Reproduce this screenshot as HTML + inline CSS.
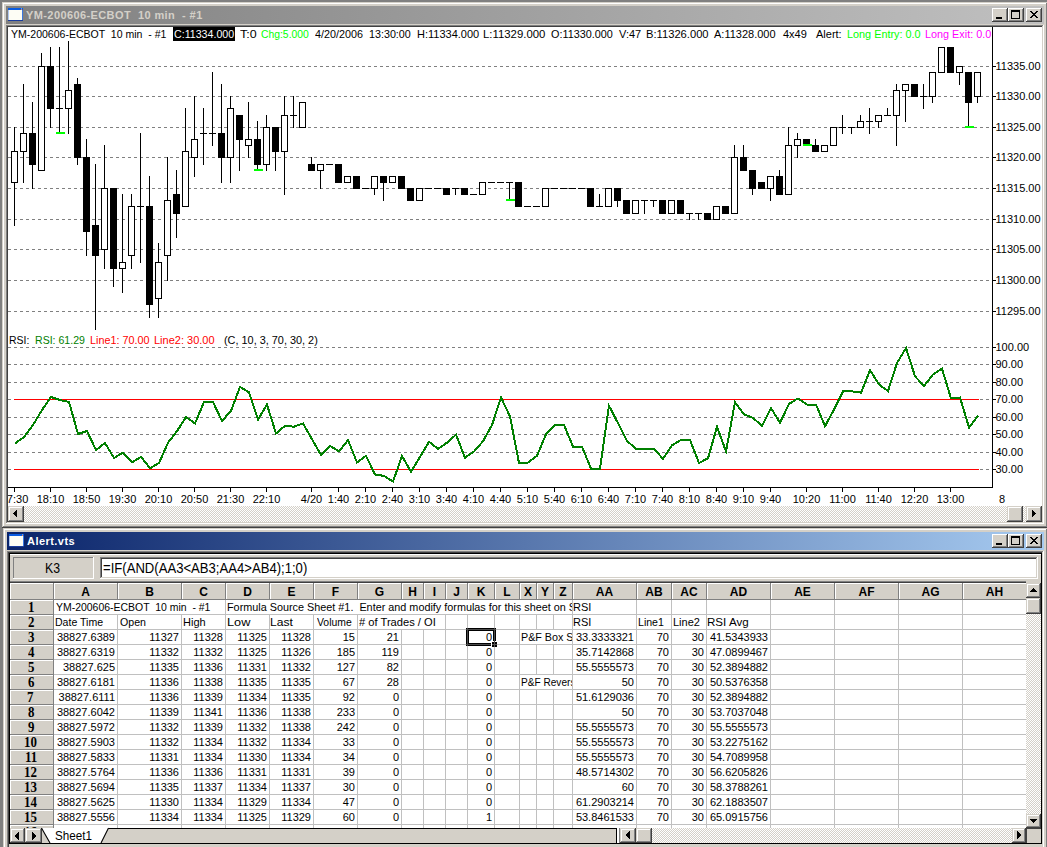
<!DOCTYPE html><html><head><meta charset="utf-8"><style>html,body{margin:0;padding:0;width:1047px;height:847px;overflow:hidden;background:#808080;position:relative}</style></head><body>
<div style="position:absolute;left:2px;top:2px;width:1046px;height:526px;background:#d4d0c8;"></div>
<div style="position:absolute;left:3px;top:3px;width:1044px;height:1px;background:#ffffff;"></div>
<div style="position:absolute;left:3px;top:3px;width:1px;height:524px;background:#ffffff;"></div>
<div style="position:absolute;left:2px;top:527px;width:1046px;height:1px;background:#404040;"></div>
<div style="position:absolute;left:1047px;top:2px;width:1px;height:526px;background:#404040;"></div>
<div style="position:absolute;left:3px;top:526px;width:1044px;height:1px;background:#808080;"></div>
<div style="position:absolute;left:1046px;top:3px;width:1px;height:524px;background:#808080;"></div>
<div style="position:absolute;left:6px;top:6px;width:1038px;height:18px;background:linear-gradient(to right,#808080,#c0c0c0)"></div>
<div style="position:absolute;left:8px;top:8px;width:15px;height:13px;background:#fdfdf5;"></div>
<div style="position:absolute;left:8px;top:8px;width:15px;height:2px;background:#0a5ce0;"></div>
<div style="position:absolute;left:21px;top:8px;width:1px;height:1px;background:#5c9cf0;"></div>
<div style="position:absolute;left:21px;top:9px;width:1px;height:1px;background:#f08040;"></div>
<div style="position:absolute;left:8px;top:10px;width:1px;height:10px;background:#b0c8f0;"></div>
<div style="position:absolute;left:22px;top:10px;width:1px;height:10px;background:#3a78e0;"></div>
<div style="position:absolute;left:8px;top:20px;width:15px;height:1px;background:#1a3c9c;"></div>
<div style="position:absolute;left:26px;top:8px;font:bold 11px 'Liberation Sans', sans-serif;color:#d4d0c8;white-space:pre;line-height:1;letter-spacing:0.4px;top:10px">YM-200606-ECBOT  10 min  - #1</div>
<div style="position:absolute;left:992px;top:8px;width:16px;height:14px;background:#d4d0c8;"></div>
<div style="position:absolute;left:992px;top:8px;width:16px;height:1px;background:#ffffff;"></div>
<div style="position:absolute;left:992px;top:8px;width:1px;height:14px;background:#ffffff;"></div>
<div style="position:absolute;left:992px;top:21px;width:16px;height:1px;background:#404040;"></div>
<div style="position:absolute;left:1007px;top:8px;width:1px;height:14px;background:#404040;"></div>
<div style="position:absolute;left:993px;top:20px;width:14px;height:1px;background:#808080;"></div>
<div style="position:absolute;left:1006px;top:9px;width:1px;height:12px;background:#808080;"></div>
<div style="position:absolute;left:1008px;top:8px;width:16px;height:14px;background:#d4d0c8;"></div>
<div style="position:absolute;left:1008px;top:8px;width:16px;height:1px;background:#ffffff;"></div>
<div style="position:absolute;left:1008px;top:8px;width:1px;height:14px;background:#ffffff;"></div>
<div style="position:absolute;left:1008px;top:21px;width:16px;height:1px;background:#404040;"></div>
<div style="position:absolute;left:1023px;top:8px;width:1px;height:14px;background:#404040;"></div>
<div style="position:absolute;left:1009px;top:20px;width:14px;height:1px;background:#808080;"></div>
<div style="position:absolute;left:1022px;top:9px;width:1px;height:12px;background:#808080;"></div>
<div style="position:absolute;left:1026px;top:8px;width:16px;height:14px;background:#d4d0c8;"></div>
<div style="position:absolute;left:1026px;top:8px;width:16px;height:1px;background:#ffffff;"></div>
<div style="position:absolute;left:1026px;top:8px;width:1px;height:14px;background:#ffffff;"></div>
<div style="position:absolute;left:1026px;top:21px;width:16px;height:1px;background:#404040;"></div>
<div style="position:absolute;left:1041px;top:8px;width:1px;height:14px;background:#404040;"></div>
<div style="position:absolute;left:1027px;top:20px;width:14px;height:1px;background:#808080;"></div>
<div style="position:absolute;left:1040px;top:9px;width:1px;height:12px;background:#808080;"></div>
<div style="position:absolute;left:996px;top:17px;width:6px;height:2px;background:#000;"></div>
<div style="position:absolute;left:1011px;top:10px;width:7px;height:6px;border:1px solid #000;border-top-width:2px;"></div>
<svg style="position:absolute;left:1026px;top:8px" width="16" height="14" shape-rendering="crispEdges"><path d="M4 3h2v1h-2zM10 3h2v1h-2zM5 4h2v1h-2zM9 4h2v1h-2zM6 5h4v1h-4zM7 6h2v1h-2zM6 7h4v1h-4zM5 8h2v1h-2zM9 8h2v1h-2zM4 9h2v1h-2zM10 9h2v1h-2z" fill="#000"/></svg>
<div style="position:absolute;left:6px;top:25px;width:1038px;height:1px;background:#808080;"></div>
<div style="position:absolute;left:6px;top:25px;width:1px;height:499px;background:#808080;"></div>
<div style="position:absolute;left:7px;top:26px;width:1036px;height:1px;background:#404040;"></div>
<div style="position:absolute;left:7px;top:26px;width:1px;height:497px;background:#404040;"></div>
<div style="position:absolute;left:6px;top:523px;width:1038px;height:1px;background:#ffffff;"></div>
<div style="position:absolute;left:1043px;top:25px;width:1px;height:499px;background:#ffffff;"></div>
<div style="position:absolute;left:7px;top:522px;width:1036px;height:1px;background:#d4d0c8;"></div>
<div style="position:absolute;left:1042px;top:26px;width:1px;height:497px;background:#d4d0c8;"></div>
<div style="position:absolute;left:8px;top:27px;width:1034px;height:495px;background:#ffffff;"></div>
<svg style="position:absolute;left:0;top:0" width="1047" height="530" shape-rendering="crispEdges"><line x1="8" y1="66.5" x2="992" y2="66.5" stroke="#808080" stroke-dasharray="3 3"/><rect x="993" y="66" width="3" height="1" fill="#000"/><text x="995.5" y="70" font-family="Liberation Sans" font-size="11" fill="#000">11335.00</text><line x1="8" y1="96.5" x2="992" y2="96.5" stroke="#808080" stroke-dasharray="3 3"/><rect x="993" y="96" width="3" height="1" fill="#000"/><text x="995.5" y="100" font-family="Liberation Sans" font-size="11" fill="#000">11330.00</text><line x1="8" y1="127.5" x2="992" y2="127.5" stroke="#808080" stroke-dasharray="3 3"/><rect x="993" y="127" width="3" height="1" fill="#000"/><text x="995.5" y="131" font-family="Liberation Sans" font-size="11" fill="#000">11325.00</text><line x1="8" y1="157.5" x2="992" y2="157.5" stroke="#808080" stroke-dasharray="3 3"/><rect x="993" y="157" width="3" height="1" fill="#000"/><text x="995.5" y="161" font-family="Liberation Sans" font-size="11" fill="#000">11320.00</text><line x1="8" y1="188.5" x2="992" y2="188.5" stroke="#808080" stroke-dasharray="3 3"/><rect x="993" y="188" width="3" height="1" fill="#000"/><text x="995.5" y="192" font-family="Liberation Sans" font-size="11" fill="#000">11315.00</text><line x1="8" y1="219.5" x2="992" y2="219.5" stroke="#808080" stroke-dasharray="3 3"/><rect x="993" y="219" width="3" height="1" fill="#000"/><text x="995.5" y="223" font-family="Liberation Sans" font-size="11" fill="#000">11310.00</text><line x1="8" y1="249.5" x2="992" y2="249.5" stroke="#808080" stroke-dasharray="3 3"/><rect x="993" y="249" width="3" height="1" fill="#000"/><text x="995.5" y="253" font-family="Liberation Sans" font-size="11" fill="#000">11305.00</text><line x1="8" y1="280.5" x2="992" y2="280.5" stroke="#808080" stroke-dasharray="3 3"/><rect x="993" y="280" width="3" height="1" fill="#000"/><text x="995.5" y="284" font-family="Liberation Sans" font-size="11" fill="#000">11300.00</text><line x1="8" y1="311.5" x2="992" y2="311.5" stroke="#808080" stroke-dasharray="3 3"/><rect x="993" y="311" width="3" height="1" fill="#000"/><text x="995.5" y="315" font-family="Liberation Sans" font-size="11" fill="#000">11295.00</text><line x1="8" y1="347.5" x2="992" y2="347.5" stroke="#808080" stroke-dasharray="3 3"/><rect x="993" y="347" width="3" height="1" fill="#000"/><text x="995.5" y="351" font-family="Liberation Sans" font-size="11" fill="#000">100.00</text><line x1="8" y1="364.5" x2="992" y2="364.5" stroke="#808080" stroke-dasharray="3 3"/><rect x="993" y="364" width="3" height="1" fill="#000"/><text x="995.5" y="368" font-family="Liberation Sans" font-size="11" fill="#000">90.00</text><line x1="8" y1="382.5" x2="992" y2="382.5" stroke="#808080" stroke-dasharray="3 3"/><rect x="993" y="382" width="3" height="1" fill="#000"/><text x="995.5" y="386" font-family="Liberation Sans" font-size="11" fill="#000">80.00</text><line x1="8" y1="399.5" x2="992" y2="399.5" stroke="#808080" stroke-dasharray="3 3"/><rect x="993" y="399" width="3" height="1" fill="#000"/><text x="995.5" y="403" font-family="Liberation Sans" font-size="11" fill="#000">70.00</text><line x1="8" y1="417.5" x2="992" y2="417.5" stroke="#808080" stroke-dasharray="3 3"/><rect x="993" y="417" width="3" height="1" fill="#000"/><text x="995.5" y="421" font-family="Liberation Sans" font-size="11" fill="#000">60.00</text><line x1="8" y1="434.5" x2="992" y2="434.5" stroke="#808080" stroke-dasharray="3 3"/><rect x="993" y="434" width="3" height="1" fill="#000"/><text x="995.5" y="438" font-family="Liberation Sans" font-size="11" fill="#000">50.00</text><line x1="8" y1="452.5" x2="992" y2="452.5" stroke="#808080" stroke-dasharray="3 3"/><rect x="993" y="452" width="3" height="1" fill="#000"/><text x="995.5" y="456" font-family="Liberation Sans" font-size="11" fill="#000">40.00</text><line x1="8" y1="469.5" x2="992" y2="469.5" stroke="#808080" stroke-dasharray="3 3"/><rect x="993" y="469" width="3" height="1" fill="#000"/><text x="995.5" y="473" font-family="Liberation Sans" font-size="11" fill="#000">30.00</text><rect x="14" y="399" width="965" height="1" fill="#ff0000"/><rect x="14" y="469" width="965" height="1" fill="#ff0000"/><rect x="992" y="27" width="1" height="461" fill="#000"/><rect x="8" y="487" width="985" height="1" fill="#000"/><rect x="14" y="127" width="1" height="99" fill="#000"/><rect x="11" y="151" width="7" height="32" fill="#000"/><rect x="12" y="152" width="5" height="30" fill="#fff"/><rect x="23" y="84" width="1" height="99" fill="#000"/><rect x="20" y="133" width="7" height="19" fill="#000"/><rect x="21" y="134" width="5" height="17" fill="#fff"/><rect x="32" y="102" width="1" height="87" fill="#000"/><rect x="29" y="133" width="7" height="32" fill="#000"/><rect x="41" y="53" width="1" height="118" fill="#000"/><rect x="38" y="66" width="7" height="105" fill="#000"/><rect x="39" y="67" width="5" height="103" fill="#fff"/><rect x="50" y="47" width="1" height="81" fill="#000"/><rect x="47" y="66" width="7" height="43" fill="#000"/><rect x="59" y="47" width="1" height="87" fill="#000"/><rect x="56" y="108" width="7" height="1" fill="#000"/><rect x="68" y="41" width="1" height="93" fill="#000"/><rect x="65" y="90" width="7" height="19" fill="#000"/><rect x="66" y="91" width="5" height="17" fill="#fff"/><rect x="77" y="78" width="1" height="87" fill="#000"/><rect x="74" y="84" width="7" height="74" fill="#000"/><rect x="86" y="139" width="1" height="117" fill="#000"/><rect x="83" y="157" width="7" height="75" fill="#000"/><rect x="95" y="164" width="1" height="166" fill="#000"/><rect x="92" y="225" width="7" height="31" fill="#000"/><rect x="104" y="145" width="1" height="124" fill="#000"/><rect x="101" y="188" width="7" height="62" fill="#000"/><rect x="102" y="189" width="5" height="60" fill="#fff"/><rect x="113" y="188" width="1" height="99" fill="#000"/><rect x="110" y="188" width="7" height="81" fill="#000"/><rect x="122" y="194" width="1" height="99" fill="#000"/><rect x="119" y="262" width="7" height="7" fill="#000"/><rect x="120" y="263" width="5" height="5" fill="#fff"/><rect x="131" y="194" width="1" height="75" fill="#000"/><rect x="128" y="206" width="7" height="50" fill="#000"/><rect x="129" y="207" width="5" height="48" fill="#fff"/><rect x="140" y="133" width="1" height="130" fill="#000"/><rect x="137" y="206" width="7" height="1" fill="#000"/><rect x="149" y="176" width="1" height="142" fill="#000"/><rect x="146" y="206" width="7" height="99" fill="#000"/><rect x="158" y="243" width="1" height="75" fill="#000"/><rect x="155" y="262" width="7" height="37" fill="#000"/><rect x="156" y="263" width="5" height="35" fill="#fff"/><rect x="167" y="157" width="1" height="124" fill="#000"/><rect x="164" y="200" width="7" height="56" fill="#000"/><rect x="165" y="201" width="5" height="54" fill="#fff"/><rect x="176" y="170" width="1" height="68" fill="#000"/><rect x="173" y="194" width="7" height="20" fill="#000"/><rect x="185" y="108" width="1" height="99" fill="#000"/><rect x="182" y="151" width="7" height="56" fill="#000"/><rect x="183" y="152" width="5" height="54" fill="#fff"/><rect x="194" y="96" width="1" height="81" fill="#000"/><rect x="191" y="139" width="7" height="19" fill="#000"/><rect x="192" y="140" width="5" height="17" fill="#fff"/><rect x="203" y="108" width="1" height="57" fill="#000"/><rect x="200" y="133" width="7" height="1" fill="#000"/><rect x="212" y="72" width="1" height="74" fill="#000"/><rect x="209" y="133" width="7" height="1" fill="#000"/><rect x="221" y="84" width="1" height="99" fill="#000"/><rect x="218" y="133" width="7" height="25" fill="#000"/><rect x="230" y="96" width="1" height="87" fill="#000"/><rect x="227" y="108" width="7" height="50" fill="#000"/><rect x="228" y="109" width="5" height="48" fill="#fff"/><rect x="239" y="115" width="1" height="56" fill="#000"/><rect x="236" y="115" width="7" height="25" fill="#000"/><rect x="248" y="102" width="1" height="56" fill="#000"/><rect x="245" y="139" width="7" height="7" fill="#000"/><rect x="246" y="140" width="5" height="5" fill="#fff"/><rect x="257" y="121" width="1" height="50" fill="#000"/><rect x="254" y="139" width="7" height="26" fill="#000"/><rect x="266" y="115" width="1" height="56" fill="#000"/><rect x="263" y="127" width="7" height="38" fill="#000"/><rect x="264" y="128" width="5" height="36" fill="#fff"/><rect x="275" y="127" width="1" height="44" fill="#000"/><rect x="272" y="127" width="7" height="25" fill="#000"/><rect x="284" y="96" width="1" height="99" fill="#000"/><rect x="281" y="115" width="7" height="37" fill="#000"/><rect x="282" y="116" width="5" height="35" fill="#fff"/><rect x="293" y="96" width="1" height="32" fill="#000"/><rect x="290" y="115" width="7" height="1" fill="#000"/><rect x="302" y="102" width="1" height="26" fill="#000"/><rect x="299" y="102" width="7" height="26" fill="#000"/><rect x="300" y="103" width="5" height="24" fill="#fff"/><rect x="311" y="157" width="1" height="14" fill="#000"/><rect x="308" y="164" width="7" height="7" fill="#000"/><rect x="320" y="164" width="1" height="25" fill="#000"/><rect x="317" y="164" width="7" height="7" fill="#000"/><rect x="318" y="165" width="5" height="5" fill="#fff"/><rect x="329" y="164" width="1" height="1" fill="#000"/><rect x="326" y="164" width="7" height="1" fill="#000"/><rect x="338" y="164" width="1" height="19" fill="#000"/><rect x="335" y="164" width="7" height="19" fill="#000"/><rect x="347" y="176" width="1" height="7" fill="#000"/><rect x="344" y="176" width="7" height="7" fill="#000"/><rect x="345" y="177" width="5" height="5" fill="#fff"/><rect x="356" y="176" width="1" height="13" fill="#000"/><rect x="353" y="176" width="7" height="13" fill="#000"/><rect x="365" y="188" width="1" height="1" fill="#000"/><rect x="362" y="188" width="7" height="1" fill="#000"/><rect x="374" y="176" width="1" height="19" fill="#000"/><rect x="371" y="176" width="7" height="13" fill="#000"/><rect x="372" y="177" width="5" height="11" fill="#fff"/><rect x="383" y="176" width="1" height="25" fill="#000"/><rect x="380" y="176" width="7" height="7" fill="#000"/><rect x="392" y="176" width="1" height="7" fill="#000"/><rect x="389" y="176" width="7" height="7" fill="#000"/><rect x="390" y="177" width="5" height="5" fill="#fff"/><rect x="401" y="176" width="1" height="13" fill="#000"/><rect x="398" y="176" width="7" height="13" fill="#000"/><rect x="410" y="188" width="1" height="13" fill="#000"/><rect x="407" y="188" width="7" height="13" fill="#000"/><rect x="419" y="188" width="1" height="13" fill="#000"/><rect x="416" y="188" width="7" height="13" fill="#000"/><rect x="417" y="189" width="5" height="11" fill="#fff"/><rect x="428" y="188" width="1" height="1" fill="#000"/><rect x="425" y="188" width="7" height="1" fill="#000"/><rect x="437" y="188" width="1" height="1" fill="#000"/><rect x="434" y="188" width="7" height="1" fill="#000"/><rect x="446" y="188" width="1" height="7" fill="#000"/><rect x="443" y="188" width="7" height="7" fill="#000"/><rect x="455" y="188" width="1" height="7" fill="#000"/><rect x="452" y="188" width="7" height="1" fill="#000"/><rect x="464" y="188" width="1" height="7" fill="#000"/><rect x="461" y="188" width="7" height="7" fill="#000"/><rect x="473" y="194" width="1" height="1" fill="#000"/><rect x="470" y="194" width="7" height="1" fill="#000"/><rect x="482" y="182" width="1" height="13" fill="#000"/><rect x="479" y="182" width="7" height="13" fill="#000"/><rect x="480" y="183" width="5" height="11" fill="#fff"/><rect x="491" y="182" width="1" height="1" fill="#000"/><rect x="488" y="182" width="7" height="1" fill="#000"/><rect x="500" y="182" width="1" height="1" fill="#000"/><rect x="497" y="182" width="7" height="1" fill="#000"/><rect x="509" y="182" width="1" height="19" fill="#000"/><rect x="506" y="182" width="7" height="1" fill="#000"/><rect x="518" y="182" width="1" height="25" fill="#000"/><rect x="515" y="182" width="7" height="25" fill="#000"/><rect x="527" y="206" width="1" height="1" fill="#000"/><rect x="524" y="206" width="7" height="1" fill="#000"/><rect x="536" y="206" width="1" height="1" fill="#000"/><rect x="533" y="206" width="7" height="1" fill="#000"/><rect x="545" y="188" width="1" height="19" fill="#000"/><rect x="542" y="188" width="7" height="19" fill="#000"/><rect x="543" y="189" width="5" height="17" fill="#fff"/><rect x="554" y="188" width="1" height="1" fill="#000"/><rect x="551" y="188" width="7" height="1" fill="#000"/><rect x="563" y="188" width="1" height="1" fill="#000"/><rect x="560" y="188" width="7" height="1" fill="#000"/><rect x="572" y="188" width="1" height="1" fill="#000"/><rect x="569" y="188" width="7" height="1" fill="#000"/><rect x="581" y="188" width="1" height="1" fill="#000"/><rect x="578" y="188" width="7" height="1" fill="#000"/><rect x="590" y="188" width="1" height="19" fill="#000"/><rect x="587" y="188" width="7" height="19" fill="#000"/><rect x="599" y="194" width="1" height="13" fill="#000"/><rect x="596" y="206" width="7" height="1" fill="#000"/><rect x="608" y="188" width="1" height="19" fill="#000"/><rect x="605" y="188" width="7" height="19" fill="#000"/><rect x="606" y="189" width="5" height="17" fill="#fff"/><rect x="617" y="188" width="1" height="19" fill="#000"/><rect x="614" y="188" width="7" height="13" fill="#000"/><rect x="626" y="200" width="1" height="14" fill="#000"/><rect x="623" y="200" width="7" height="14" fill="#000"/><rect x="635" y="200" width="1" height="14" fill="#000"/><rect x="632" y="200" width="7" height="14" fill="#000"/><rect x="633" y="201" width="5" height="12" fill="#fff"/><rect x="644" y="200" width="1" height="14" fill="#000"/><rect x="641" y="200" width="7" height="1" fill="#000"/><rect x="653" y="200" width="1" height="7" fill="#000"/><rect x="650" y="200" width="7" height="1" fill="#000"/><rect x="662" y="200" width="1" height="14" fill="#000"/><rect x="659" y="200" width="7" height="14" fill="#000"/><rect x="671" y="200" width="1" height="14" fill="#000"/><rect x="668" y="200" width="7" height="14" fill="#000"/><rect x="669" y="201" width="5" height="12" fill="#fff"/><rect x="680" y="200" width="1" height="14" fill="#000"/><rect x="677" y="200" width="7" height="14" fill="#000"/><rect x="689" y="213" width="1" height="7" fill="#000"/><rect x="686" y="213" width="7" height="1" fill="#000"/><rect x="698" y="213" width="1" height="7" fill="#000"/><rect x="695" y="213" width="7" height="1" fill="#000"/><rect x="707" y="213" width="1" height="7" fill="#000"/><rect x="704" y="213" width="7" height="7" fill="#000"/><rect x="716" y="206" width="1" height="14" fill="#000"/><rect x="713" y="206" width="7" height="14" fill="#000"/><rect x="714" y="207" width="5" height="12" fill="#fff"/><rect x="725" y="206" width="1" height="8" fill="#000"/><rect x="722" y="206" width="7" height="8" fill="#000"/><rect x="734" y="145" width="1" height="69" fill="#000"/><rect x="731" y="157" width="7" height="57" fill="#000"/><rect x="732" y="158" width="5" height="55" fill="#fff"/><rect x="743" y="145" width="1" height="26" fill="#000"/><rect x="740" y="157" width="7" height="14" fill="#000"/><rect x="752" y="170" width="1" height="25" fill="#000"/><rect x="749" y="170" width="7" height="19" fill="#000"/><rect x="761" y="182" width="1" height="7" fill="#000"/><rect x="758" y="182" width="7" height="7" fill="#000"/><rect x="770" y="176" width="1" height="25" fill="#000"/><rect x="767" y="176" width="7" height="13" fill="#000"/><rect x="768" y="177" width="5" height="11" fill="#fff"/><rect x="779" y="170" width="1" height="25" fill="#000"/><rect x="776" y="176" width="7" height="19" fill="#000"/><rect x="788" y="127" width="1" height="68" fill="#000"/><rect x="785" y="145" width="7" height="50" fill="#000"/><rect x="786" y="146" width="5" height="48" fill="#fff"/><rect x="797" y="133" width="1" height="25" fill="#000"/><rect x="794" y="139" width="7" height="7" fill="#000"/><rect x="795" y="140" width="5" height="5" fill="#fff"/><rect x="806" y="139" width="1" height="7" fill="#000"/><rect x="803" y="139" width="7" height="7" fill="#000"/><rect x="815" y="139" width="1" height="13" fill="#000"/><rect x="812" y="145" width="7" height="7" fill="#000"/><rect x="824" y="145" width="1" height="7" fill="#000"/><rect x="821" y="145" width="7" height="7" fill="#000"/><rect x="822" y="146" width="5" height="5" fill="#fff"/><rect x="833" y="127" width="1" height="19" fill="#000"/><rect x="830" y="127" width="7" height="19" fill="#000"/><rect x="831" y="128" width="5" height="17" fill="#fff"/><rect x="842" y="115" width="1" height="19" fill="#000"/><rect x="839" y="127" width="7" height="1" fill="#000"/><rect x="851" y="127" width="1" height="7" fill="#000"/><rect x="848" y="127" width="7" height="1" fill="#000"/><rect x="860" y="115" width="1" height="13" fill="#000"/><rect x="857" y="121" width="7" height="7" fill="#000"/><rect x="858" y="122" width="5" height="5" fill="#fff"/><rect x="869" y="108" width="1" height="26" fill="#000"/><rect x="866" y="121" width="7" height="1" fill="#000"/><rect x="878" y="115" width="1" height="13" fill="#000"/><rect x="875" y="115" width="7" height="7" fill="#000"/><rect x="876" y="116" width="5" height="5" fill="#fff"/><rect x="887" y="108" width="1" height="8" fill="#000"/><rect x="884" y="115" width="7" height="1" fill="#000"/><rect x="896" y="84" width="1" height="62" fill="#000"/><rect x="893" y="90" width="7" height="26" fill="#000"/><rect x="894" y="91" width="5" height="24" fill="#fff"/><rect x="905" y="84" width="1" height="38" fill="#000"/><rect x="902" y="84" width="7" height="7" fill="#000"/><rect x="903" y="85" width="5" height="5" fill="#fff"/><rect x="914" y="84" width="1" height="13" fill="#000"/><rect x="911" y="84" width="7" height="13" fill="#000"/><rect x="923" y="84" width="1" height="25" fill="#000"/><rect x="920" y="96" width="7" height="1" fill="#000"/><rect x="932" y="72" width="1" height="31" fill="#000"/><rect x="929" y="72" width="7" height="25" fill="#000"/><rect x="930" y="73" width="5" height="23" fill="#fff"/><rect x="941" y="47" width="1" height="26" fill="#000"/><rect x="938" y="47" width="7" height="26" fill="#000"/><rect x="939" y="48" width="5" height="24" fill="#fff"/><rect x="950" y="47" width="1" height="26" fill="#000"/><rect x="947" y="47" width="7" height="26" fill="#000"/><rect x="959" y="66" width="1" height="19" fill="#000"/><rect x="956" y="66" width="7" height="7" fill="#000"/><rect x="957" y="67" width="5" height="5" fill="#fff"/><rect x="968" y="72" width="1" height="56" fill="#000"/><rect x="965" y="72" width="7" height="31" fill="#000"/><rect x="977" y="72" width="1" height="31" fill="#000"/><rect x="974" y="72" width="7" height="25" fill="#000"/><rect x="975" y="73" width="5" height="23" fill="#fff"/><rect x="56" y="132" width="9" height="2" fill="#00ff00"/><rect x="254" y="169" width="9" height="2" fill="#00ff00"/><rect x="506" y="199" width="9" height="2" fill="#00ff00"/><rect x="803" y="144" width="9" height="2" fill="#00ff00"/><rect x="965" y="126" width="9" height="2" fill="#00ff00"/><polyline points="15,443.5 24,437.0 33,425.0 42,410.0 51,397.0 60,400.0 69,402.0 78,434.0 87,431.0 96,450.0 105,443.0 114,458.0 123,452.5 132,462.5 141,456.8 150,468.3 159,463.0 168,442.7 177,431.2 186,417.0 195,423.5 204,402.0 213,402.0 222,421.0 231,410.8 240,387.0 249,392.2 258,419.6 267,404.6 276,433.5 285,425.8 294,426.7 303,423.5 312,439.1 321,455.0 330,445.8 339,451.5 348,440.0 357,462.5 366,455.9 375,474.5 384,475.9 393,481.6 402,455.9 411,471.9 420,456.8 429,441.8 438,448.8 447,442.7 456,434.7 465,457.7 474,451.5 483,441.2 492,425.0 501,397.5 510,416.5 519,463.0 528,462.5 537,455.9 546,434.2 555,425.0 564,425.0 573,446.7 582,446.7 591,468.7 600,468.7 609,405.8 618,423.2 627,440.9 636,448.8 645,448.8 654,448.8 663,458.9 672,445.3 681,440.0 690,440.0 699,463.0 708,458.2 717,426.7 726,451.5 735,402.3 744,414.3 753,417.9 762,425.8 771,408.1 780,422.8 789,404.0 798,398.4 807,404.6 816,404.6 825,426.2 834,409.6 843,391.3 852,391.3 861,392.7 870,370.1 879,384.5 888,391.0 897,363.0 906,348.0 915,376.3 924,386.0 933,374.5 942,368.7 951,398.4 960,397.5 969,427.6 978,415.8" fill="none" stroke="#008000" stroke-width="2" stroke-linejoin="miter"/><defs><clipPath id="cp"><rect x="8" y="27" width="1034" height="479"/></clipPath></defs><g clip-path="url(#cp)"><rect x="14" y="488" width="1" height="4" fill="#000"/><text x="14.5" y="503" text-anchor="middle" font-family="Liberation Sans" font-size="11" fill="#000">17:30</text><rect x="50" y="488" width="1" height="4" fill="#000"/><text x="50.5" y="503" text-anchor="middle" font-family="Liberation Sans" font-size="11" fill="#000">18:10</text><rect x="86" y="488" width="1" height="4" fill="#000"/><text x="86.5" y="503" text-anchor="middle" font-family="Liberation Sans" font-size="11" fill="#000">18:50</text><rect x="122" y="488" width="1" height="4" fill="#000"/><text x="122.5" y="503" text-anchor="middle" font-family="Liberation Sans" font-size="11" fill="#000">19:30</text><rect x="158" y="488" width="1" height="4" fill="#000"/><text x="158.5" y="503" text-anchor="middle" font-family="Liberation Sans" font-size="11" fill="#000">20:10</text><rect x="194" y="488" width="1" height="4" fill="#000"/><text x="194.5" y="503" text-anchor="middle" font-family="Liberation Sans" font-size="11" fill="#000">20:50</text><rect x="230" y="488" width="1" height="4" fill="#000"/><text x="230.5" y="503" text-anchor="middle" font-family="Liberation Sans" font-size="11" fill="#000">21:30</text><rect x="266" y="488" width="1" height="4" fill="#000"/><text x="266.5" y="503" text-anchor="middle" font-family="Liberation Sans" font-size="11" fill="#000">22:10</text><rect x="311" y="488" width="1" height="4" fill="#000"/><text x="311.5" y="503" text-anchor="middle" font-family="Liberation Sans" font-size="11" fill="#000">4/20</text><rect x="338" y="488" width="1" height="4" fill="#000"/><text x="338.5" y="503" text-anchor="middle" font-family="Liberation Sans" font-size="11" fill="#000">1:40</text><rect x="365" y="488" width="1" height="4" fill="#000"/><text x="365.5" y="503" text-anchor="middle" font-family="Liberation Sans" font-size="11" fill="#000">2:10</text><rect x="392" y="488" width="1" height="4" fill="#000"/><text x="392.5" y="503" text-anchor="middle" font-family="Liberation Sans" font-size="11" fill="#000">2:40</text><rect x="419" y="488" width="1" height="4" fill="#000"/><text x="419.5" y="503" text-anchor="middle" font-family="Liberation Sans" font-size="11" fill="#000">3:10</text><rect x="446" y="488" width="1" height="4" fill="#000"/><text x="446.5" y="503" text-anchor="middle" font-family="Liberation Sans" font-size="11" fill="#000">3:40</text><rect x="473" y="488" width="1" height="4" fill="#000"/><text x="473.5" y="503" text-anchor="middle" font-family="Liberation Sans" font-size="11" fill="#000">4:10</text><rect x="500" y="488" width="1" height="4" fill="#000"/><text x="500.5" y="503" text-anchor="middle" font-family="Liberation Sans" font-size="11" fill="#000">4:40</text><rect x="527" y="488" width="1" height="4" fill="#000"/><text x="527.5" y="503" text-anchor="middle" font-family="Liberation Sans" font-size="11" fill="#000">5:10</text><rect x="554" y="488" width="1" height="4" fill="#000"/><text x="554.5" y="503" text-anchor="middle" font-family="Liberation Sans" font-size="11" fill="#000">5:40</text><rect x="581" y="488" width="1" height="4" fill="#000"/><text x="581.5" y="503" text-anchor="middle" font-family="Liberation Sans" font-size="11" fill="#000">6:10</text><rect x="608" y="488" width="1" height="4" fill="#000"/><text x="608.5" y="503" text-anchor="middle" font-family="Liberation Sans" font-size="11" fill="#000">6:40</text><rect x="635" y="488" width="1" height="4" fill="#000"/><text x="635.5" y="503" text-anchor="middle" font-family="Liberation Sans" font-size="11" fill="#000">7:10</text><rect x="662" y="488" width="1" height="4" fill="#000"/><text x="662.5" y="503" text-anchor="middle" font-family="Liberation Sans" font-size="11" fill="#000">7:40</text><rect x="689" y="488" width="1" height="4" fill="#000"/><text x="689.5" y="503" text-anchor="middle" font-family="Liberation Sans" font-size="11" fill="#000">8:10</text><rect x="716" y="488" width="1" height="4" fill="#000"/><text x="716.5" y="503" text-anchor="middle" font-family="Liberation Sans" font-size="11" fill="#000">8:40</text><rect x="743" y="488" width="1" height="4" fill="#000"/><text x="743.5" y="503" text-anchor="middle" font-family="Liberation Sans" font-size="11" fill="#000">9:10</text><rect x="770" y="488" width="1" height="4" fill="#000"/><text x="770.5" y="503" text-anchor="middle" font-family="Liberation Sans" font-size="11" fill="#000">9:40</text><rect x="806" y="488" width="1" height="4" fill="#000"/><text x="806.5" y="503" text-anchor="middle" font-family="Liberation Sans" font-size="11" fill="#000">10:20</text><rect x="842" y="488" width="1" height="4" fill="#000"/><text x="842.5" y="503" text-anchor="middle" font-family="Liberation Sans" font-size="11" fill="#000">11:00</text><rect x="878" y="488" width="1" height="4" fill="#000"/><text x="878.5" y="503" text-anchor="middle" font-family="Liberation Sans" font-size="11" fill="#000">11:40</text><rect x="914" y="488" width="1" height="4" fill="#000"/><text x="914.5" y="503" text-anchor="middle" font-family="Liberation Sans" font-size="11" fill="#000">12:20</text><rect x="950" y="488" width="1" height="4" fill="#000"/><text x="950.5" y="503" text-anchor="middle" font-family="Liberation Sans" font-size="11" fill="#000">13:00</text><text x="1002" y="503" text-anchor="middle" font-family="Liberation Sans" font-size="11" fill="#000">8</text></g></svg>
<div style="position:absolute;left:173px;top:27px;width:62px;height:14px;background:#000;"></div>
<div style="position:absolute;left:11.0px;top:29px;font:normal 11px 'Liberation Sans', sans-serif;color:#000;white-space:pre;line-height:1;transform:scaleX(0.9568);transform-origin:0 0;">YM-200606-ECBOT  10 min  - #1</div>
<div style="position:absolute;left:174.0px;top:29px;font:normal 11px 'Liberation Sans', sans-serif;color:#fff;white-space:pre;line-height:1;transform:scaleX(0.9677);transform-origin:0 0;">C:11334.000</div>
<div style="position:absolute;left:240.0px;top:29px;font:normal 11px 'Liberation Sans', sans-serif;color:#000;white-space:pre;line-height:1;transform:scaleX(1.1333);transform-origin:0 0;">T:0</div>
<div style="position:absolute;left:261.0px;top:29px;font:normal 11px 'Liberation Sans', sans-serif;color:#00ff00;white-space:pre;line-height:1;transform:scaleX(0.9412);transform-origin:0 0;">Chg:5.000</div>
<div style="position:absolute;left:315.0px;top:29px;font:normal 11px 'Liberation Sans', sans-serif;color:#000;white-space:pre;line-height:1;transform:scaleX(0.9796);transform-origin:0 0;">4/20/2006</div>
<div style="position:absolute;left:369.02px;top:29px;font:normal 11px 'Liberation Sans', sans-serif;color:#000;white-space:pre;line-height:1;transform:scaleX(0.9762);transform-origin:0 0;">13:30:00</div>
<div style="position:absolute;left:417.0px;top:29px;font:normal 11px 'Liberation Sans', sans-serif;color:#000;white-space:pre;line-height:1;transform:scaleX(1.0000);transform-origin:0 0;">H:11334.000</div>
<div style="position:absolute;left:482.97px;top:29px;font:normal 11px 'Liberation Sans', sans-serif;color:#000;white-space:pre;line-height:1;transform:scaleX(1.0339);transform-origin:0 0;">L:11329.000</div>
<div style="position:absolute;left:551.0px;top:29px;font:normal 11px 'Liberation Sans', sans-serif;color:#000;white-space:pre;line-height:1;transform:scaleX(0.9841);transform-origin:0 0;">O:11330.000</div>
<div style="position:absolute;left:619.0px;top:29px;font:normal 11px 'Liberation Sans', sans-serif;color:#000;white-space:pre;line-height:1;transform:scaleX(1.0000);transform-origin:0 0;">V:47</div>
<div style="position:absolute;left:645.98px;top:29px;font:normal 11px 'Liberation Sans', sans-serif;color:#000;white-space:pre;line-height:1;transform:scaleX(1.0164);transform-origin:0 0;">B:11326.000</div>
<div style="position:absolute;left:714.0px;top:29px;font:normal 11px 'Liberation Sans', sans-serif;color:#000;white-space:pre;line-height:1;transform:scaleX(1.0000);transform-origin:0 0;">A:11328.000</div>
<div style="position:absolute;left:783.0px;top:29px;font:normal 11px 'Liberation Sans', sans-serif;color:#000;white-space:pre;line-height:1;transform:scaleX(1.0000);transform-origin:0 0;">4x49</div>
<div style="position:absolute;left:816.0px;top:29px;font:normal 11px 'Liberation Sans', sans-serif;color:#000;white-space:pre;line-height:1;transform:scaleX(1.0000);transform-origin:0 0;">Alert:</div>
<div style="position:absolute;left:847.01px;top:29px;font:normal 11px 'Liberation Sans', sans-serif;color:#00ff00;white-space:pre;line-height:1;transform:scaleX(0.9865);transform-origin:0 0;">Long Entry: 0.0</div>
<div style="position:absolute;left:0px;top:27px;width:992px;height:14px;overflow:hidden">
<div style="position:absolute;left:925.02px;top:2px;font:normal 11px 'Liberation Sans', sans-serif;color:#ff00ff;white-space:pre;line-height:1;transform:scaleX(0.9848);transform-origin:0 0;">Long Exit: 0.0</div>
</div>
<div style="position:absolute;left:9.05px;top:335px;font:normal 11px 'Liberation Sans', sans-serif;color:#000;white-space:pre;line-height:1;transform:scaleX(0.9500);transform-origin:0 0;">RSI:</div>
<div style="position:absolute;left:35.04px;top:335px;font:normal 11px 'Liberation Sans', sans-serif;color:#008000;white-space:pre;line-height:1;transform:scaleX(0.9608);transform-origin:0 0;">RSI: 61.29</div>
<div style="position:absolute;left:90.02px;top:335px;font:normal 11px 'Liberation Sans', sans-serif;color:#ff0000;white-space:pre;line-height:1;transform:scaleX(0.9833);transform-origin:0 0;">Line1: 70.00</div>
<div style="position:absolute;left:154.0px;top:335px;font:normal 11px 'Liberation Sans', sans-serif;color:#ff0000;white-space:pre;line-height:1;transform:scaleX(1.0000);transform-origin:0 0;">Line2: 30.00</div>
<div style="position:absolute;left:224.0px;top:335px;font:normal 11px 'Liberation Sans', sans-serif;color:#000;white-space:pre;line-height:1;transform:scaleX(0.9894);transform-origin:0 0;">(C, 10, 3, 70, 30, 2)</div>
<div style="position:absolute;left:24px;top:506px;width:1002px;height:16px;background-color:#ffffff;background-image:linear-gradient(45deg,#d4d0c8 25%,transparent 25%,transparent 75%,#d4d0c8 75%),linear-gradient(45deg,#d4d0c8 25%,transparent 25%,transparent 75%,#d4d0c8 75%);background-size:2px 2px;background-position:0 0,1px 1px;"></div>
<div style="position:absolute;left:8px;top:506px;width:16px;height:16px;background:#d4d0c8;"></div>
<div style="position:absolute;left:8px;top:506px;width:16px;height:1px;background:#d4d0c8;"></div>
<div style="position:absolute;left:8px;top:506px;width:1px;height:16px;background:#d4d0c8;"></div>
<div style="position:absolute;left:9px;top:507px;width:14px;height:1px;background:#ffffff;"></div>
<div style="position:absolute;left:9px;top:507px;width:1px;height:14px;background:#ffffff;"></div>
<div style="position:absolute;left:8px;top:521px;width:16px;height:1px;background:#404040;"></div>
<div style="position:absolute;left:23px;top:506px;width:1px;height:16px;background:#404040;"></div>
<div style="position:absolute;left:9px;top:520px;width:14px;height:1px;background:#808080;"></div>
<div style="position:absolute;left:22px;top:507px;width:1px;height:14px;background:#808080;"></div>
<svg style="position:absolute;left:8px;top:506px" width="16" height="16" shape-rendering="crispEdges"><path d="M5 7h1v1h-1zM6 6h1v3h-1zM7 5h1v5h-1zM8 4h1v7h-1z" fill="#000"/></svg>
<div style="position:absolute;left:1007px;top:506px;width:16px;height:16px;background:#d4d0c8;"></div>
<div style="position:absolute;left:1007px;top:506px;width:16px;height:1px;background:#d4d0c8;"></div>
<div style="position:absolute;left:1007px;top:506px;width:1px;height:16px;background:#d4d0c8;"></div>
<div style="position:absolute;left:1008px;top:507px;width:14px;height:1px;background:#ffffff;"></div>
<div style="position:absolute;left:1008px;top:507px;width:1px;height:14px;background:#ffffff;"></div>
<div style="position:absolute;left:1007px;top:521px;width:16px;height:1px;background:#404040;"></div>
<div style="position:absolute;left:1022px;top:506px;width:1px;height:16px;background:#404040;"></div>
<div style="position:absolute;left:1008px;top:520px;width:14px;height:1px;background:#808080;"></div>
<div style="position:absolute;left:1021px;top:507px;width:1px;height:14px;background:#808080;"></div>
<div style="position:absolute;left:1026px;top:506px;width:16px;height:16px;background:#d4d0c8;"></div>
<div style="position:absolute;left:1026px;top:506px;width:16px;height:1px;background:#d4d0c8;"></div>
<div style="position:absolute;left:1026px;top:506px;width:1px;height:16px;background:#d4d0c8;"></div>
<div style="position:absolute;left:1027px;top:507px;width:14px;height:1px;background:#ffffff;"></div>
<div style="position:absolute;left:1027px;top:507px;width:1px;height:14px;background:#ffffff;"></div>
<div style="position:absolute;left:1026px;top:521px;width:16px;height:1px;background:#404040;"></div>
<div style="position:absolute;left:1041px;top:506px;width:1px;height:16px;background:#404040;"></div>
<div style="position:absolute;left:1027px;top:520px;width:14px;height:1px;background:#808080;"></div>
<div style="position:absolute;left:1040px;top:507px;width:1px;height:14px;background:#808080;"></div>
<svg style="position:absolute;left:1026px;top:506px" width="16" height="16" shape-rendering="crispEdges"><path d="M6 4h1v7h-1zM7 5h1v5h-1zM8 6h1v3h-1zM9 7h1v1h-1z" fill="#000"/></svg>
<div style="position:absolute;left:3px;top:528px;width:1045px;height:333px;background:#d4d0c8;"></div>
<div style="position:absolute;left:4px;top:529px;width:1043px;height:1px;background:#ffffff;"></div>
<div style="position:absolute;left:4px;top:529px;width:1px;height:331px;background:#ffffff;"></div>
<div style="position:absolute;left:3px;top:860px;width:1045px;height:1px;background:#404040;"></div>
<div style="position:absolute;left:1047px;top:528px;width:1px;height:333px;background:#404040;"></div>
<div style="position:absolute;left:4px;top:859px;width:1043px;height:1px;background:#808080;"></div>
<div style="position:absolute;left:1046px;top:529px;width:1px;height:331px;background:#808080;"></div>
<div style="position:absolute;left:7px;top:532px;width:1037px;height:18px;background:linear-gradient(to right,#0a246a,#a6caf0)"></div>
<div style="position:absolute;left:9px;top:534px;width:15px;height:13px;background:#fdfdf5;"></div>
<div style="position:absolute;left:9px;top:534px;width:15px;height:2px;background:#0a5ce0;"></div>
<div style="position:absolute;left:22px;top:534px;width:1px;height:1px;background:#5c9cf0;"></div>
<div style="position:absolute;left:22px;top:535px;width:1px;height:1px;background:#f08040;"></div>
<div style="position:absolute;left:9px;top:536px;width:1px;height:10px;background:#b0c8f0;"></div>
<div style="position:absolute;left:23px;top:536px;width:1px;height:10px;background:#3a78e0;"></div>
<div style="position:absolute;left:9px;top:546px;width:15px;height:1px;background:#1a3c9c;"></div>
<div style="position:absolute;left:27px;top:536px;font:bold 11px 'Liberation Sans', sans-serif;color:#fff;white-space:pre;line-height:1;letter-spacing:0.45px">Alert.vts</div>
<div style="position:absolute;left:992px;top:534px;width:16px;height:14px;background:#d4d0c8;"></div>
<div style="position:absolute;left:992px;top:534px;width:16px;height:1px;background:#ffffff;"></div>
<div style="position:absolute;left:992px;top:534px;width:1px;height:14px;background:#ffffff;"></div>
<div style="position:absolute;left:992px;top:547px;width:16px;height:1px;background:#404040;"></div>
<div style="position:absolute;left:1007px;top:534px;width:1px;height:14px;background:#404040;"></div>
<div style="position:absolute;left:993px;top:546px;width:14px;height:1px;background:#808080;"></div>
<div style="position:absolute;left:1006px;top:535px;width:1px;height:12px;background:#808080;"></div>
<div style="position:absolute;left:1008px;top:534px;width:16px;height:14px;background:#d4d0c8;"></div>
<div style="position:absolute;left:1008px;top:534px;width:16px;height:1px;background:#ffffff;"></div>
<div style="position:absolute;left:1008px;top:534px;width:1px;height:14px;background:#ffffff;"></div>
<div style="position:absolute;left:1008px;top:547px;width:16px;height:1px;background:#404040;"></div>
<div style="position:absolute;left:1023px;top:534px;width:1px;height:14px;background:#404040;"></div>
<div style="position:absolute;left:1009px;top:546px;width:14px;height:1px;background:#808080;"></div>
<div style="position:absolute;left:1022px;top:535px;width:1px;height:12px;background:#808080;"></div>
<div style="position:absolute;left:1026px;top:534px;width:16px;height:14px;background:#d4d0c8;"></div>
<div style="position:absolute;left:1026px;top:534px;width:16px;height:1px;background:#ffffff;"></div>
<div style="position:absolute;left:1026px;top:534px;width:1px;height:14px;background:#ffffff;"></div>
<div style="position:absolute;left:1026px;top:547px;width:16px;height:1px;background:#404040;"></div>
<div style="position:absolute;left:1041px;top:534px;width:1px;height:14px;background:#404040;"></div>
<div style="position:absolute;left:1027px;top:546px;width:14px;height:1px;background:#808080;"></div>
<div style="position:absolute;left:1040px;top:535px;width:1px;height:12px;background:#808080;"></div>
<div style="position:absolute;left:996px;top:543px;width:6px;height:2px;background:#000;"></div>
<div style="position:absolute;left:1011px;top:536px;width:7px;height:6px;border:1px solid #000;border-top-width:2px;"></div>
<svg style="position:absolute;left:1026px;top:534px" width="16" height="14" shape-rendering="crispEdges"><path d="M4 3h2v1h-2zM10 3h2v1h-2zM5 4h2v1h-2zM9 4h2v1h-2zM6 5h4v1h-4zM7 6h2v1h-2zM6 7h4v1h-4zM5 8h2v1h-2zM9 8h2v1h-2zM4 9h2v1h-2zM10 9h2v1h-2z" fill="#000"/></svg>
<div style="position:absolute;left:7px;top:551px;width:1037px;height:1px;background:#808080;"></div>
<div style="position:absolute;left:7px;top:551px;width:1px;height:310px;background:#808080;"></div>
<div style="position:absolute;left:8px;top:552px;width:1035px;height:1px;background:#404040;"></div>
<div style="position:absolute;left:8px;top:552px;width:1px;height:308px;background:#404040;"></div>
<div style="position:absolute;left:7px;top:860px;width:1037px;height:1px;background:#ffffff;"></div>
<div style="position:absolute;left:1043px;top:551px;width:1px;height:310px;background:#ffffff;"></div>
<div style="position:absolute;left:8px;top:859px;width:1035px;height:1px;background:#d4d0c8;"></div>
<div style="position:absolute;left:1042px;top:552px;width:1px;height:308px;background:#d4d0c8;"></div>
<div style="position:absolute;left:9px;top:553px;width:1033px;height:291px;background:#000;"></div>
<div style="position:absolute;left:10px;top:554px;width:1031px;height:289px;background:#d4d0c8;"></div>
<div style="position:absolute;left:10px;top:554px;width:1031px;height:1px;background:#ffffff;"></div>
<div style="position:absolute;left:13px;top:557px;width:81px;height:22px;background:#d4d0c8;"></div>
<div style="position:absolute;left:13px;top:557px;width:81px;height:1px;background:#808080;"></div>
<div style="position:absolute;left:13px;top:557px;width:1px;height:22px;background:#808080;"></div>
<div style="position:absolute;left:13px;top:578px;width:81px;height:1px;background:#ffffff;"></div>
<div style="position:absolute;left:93px;top:557px;width:1px;height:22px;background:#ffffff;"></div>
<div style="position:absolute;left:45.12px;top:561px;font:normal 14px 'Liberation Sans', sans-serif;color:#000;white-space:pre;line-height:1;transform:scaleX(0.8750);transform-origin:0 0;">K3</div>
<div style="position:absolute;left:100px;top:557px;width:938px;height:1px;background:#808080;"></div>
<div style="position:absolute;left:100px;top:557px;width:1px;height:22px;background:#808080;"></div>
<div style="position:absolute;left:101px;top:558px;width:936px;height:1px;background:#404040;"></div>
<div style="position:absolute;left:101px;top:558px;width:1px;height:20px;background:#404040;"></div>
<div style="position:absolute;left:100px;top:578px;width:938px;height:1px;background:#ffffff;"></div>
<div style="position:absolute;left:1037px;top:557px;width:1px;height:22px;background:#ffffff;"></div>
<div style="position:absolute;left:101px;top:577px;width:936px;height:1px;background:#d4d0c8;"></div>
<div style="position:absolute;left:1036px;top:558px;width:1px;height:20px;background:#d4d0c8;"></div>
<div style="position:absolute;left:102px;top:559px;width:934px;height:18px;background:#ffffff;"></div>
<div style="position:absolute;left:103.0px;top:561px;font:normal 14px 'Liberation Sans', sans-serif;color:#000;white-space:pre;line-height:1;transform:scaleX(0.9358);transform-origin:0 0;">=IF(AND(AA3&lt;AB3;AA4&gt;AB4);1;0)</div>
<div style="position:absolute;left:10px;top:581px;width:1016px;height:1px;background:#808080;"></div>
<div style="position:absolute;left:10px;top:582px;width:1016px;height:1px;background:#404040;"></div>
<div style="position:absolute;left:54px;top:600px;width:972px;height:228px;background:#ffffff;"></div>
<div style="position:absolute;left:10px;top:583px;width:44px;height:17px;background:#d4d0c8;"></div>
<div style="position:absolute;left:10px;top:583px;width:43px;height:1px;background:#ffffff;"></div>
<div style="position:absolute;left:10px;top:583px;width:1px;height:16px;background:#ffffff;"></div>
<div style="position:absolute;left:10px;top:599px;width:44px;height:1px;background:#808080;"></div>
<div style="position:absolute;left:53px;top:583px;width:1px;height:17px;background:#808080;"></div>
<div style="position:absolute;left:54px;top:583px;width:64px;height:17px;background:#d4d0c8;"></div>
<div style="position:absolute;left:54px;top:583px;width:63px;height:1px;background:#ffffff;"></div>
<div style="position:absolute;left:54px;top:583px;width:1px;height:16px;background:#ffffff;"></div>
<div style="position:absolute;left:54px;top:599px;width:64px;height:1px;background:#808080;"></div>
<div style="position:absolute;left:117px;top:583px;width:1px;height:17px;background:#808080;"></div>
<div style="position:absolute;left:54px;top:586px;width:63px;text-align:center;font:bold 12px 'Liberation Sans', sans-serif;line-height:1;white-space:pre;overflow:hidden">A</div>
<div style="position:absolute;left:118px;top:583px;width:64px;height:17px;background:#d4d0c8;"></div>
<div style="position:absolute;left:118px;top:583px;width:63px;height:1px;background:#ffffff;"></div>
<div style="position:absolute;left:118px;top:583px;width:1px;height:16px;background:#ffffff;"></div>
<div style="position:absolute;left:118px;top:599px;width:64px;height:1px;background:#808080;"></div>
<div style="position:absolute;left:181px;top:583px;width:1px;height:17px;background:#808080;"></div>
<div style="position:absolute;left:118px;top:586px;width:63px;text-align:center;font:bold 12px 'Liberation Sans', sans-serif;line-height:1;white-space:pre;overflow:hidden">B</div>
<div style="position:absolute;left:182px;top:583px;width:44px;height:17px;background:#d4d0c8;"></div>
<div style="position:absolute;left:182px;top:583px;width:43px;height:1px;background:#ffffff;"></div>
<div style="position:absolute;left:182px;top:583px;width:1px;height:16px;background:#ffffff;"></div>
<div style="position:absolute;left:182px;top:599px;width:44px;height:1px;background:#808080;"></div>
<div style="position:absolute;left:225px;top:583px;width:1px;height:17px;background:#808080;"></div>
<div style="position:absolute;left:182px;top:586px;width:43px;text-align:center;font:bold 12px 'Liberation Sans', sans-serif;line-height:1;white-space:pre;overflow:hidden">C</div>
<div style="position:absolute;left:226px;top:583px;width:44px;height:17px;background:#d4d0c8;"></div>
<div style="position:absolute;left:226px;top:583px;width:43px;height:1px;background:#ffffff;"></div>
<div style="position:absolute;left:226px;top:583px;width:1px;height:16px;background:#ffffff;"></div>
<div style="position:absolute;left:226px;top:599px;width:44px;height:1px;background:#808080;"></div>
<div style="position:absolute;left:269px;top:583px;width:1px;height:17px;background:#808080;"></div>
<div style="position:absolute;left:226px;top:586px;width:43px;text-align:center;font:bold 12px 'Liberation Sans', sans-serif;line-height:1;white-space:pre;overflow:hidden">D</div>
<div style="position:absolute;left:270px;top:583px;width:44px;height:17px;background:#d4d0c8;"></div>
<div style="position:absolute;left:270px;top:583px;width:43px;height:1px;background:#ffffff;"></div>
<div style="position:absolute;left:270px;top:583px;width:1px;height:16px;background:#ffffff;"></div>
<div style="position:absolute;left:270px;top:599px;width:44px;height:1px;background:#808080;"></div>
<div style="position:absolute;left:313px;top:583px;width:1px;height:17px;background:#808080;"></div>
<div style="position:absolute;left:270px;top:586px;width:43px;text-align:center;font:bold 12px 'Liberation Sans', sans-serif;line-height:1;white-space:pre;overflow:hidden">E</div>
<div style="position:absolute;left:314px;top:583px;width:44px;height:17px;background:#d4d0c8;"></div>
<div style="position:absolute;left:314px;top:583px;width:43px;height:1px;background:#ffffff;"></div>
<div style="position:absolute;left:314px;top:583px;width:1px;height:16px;background:#ffffff;"></div>
<div style="position:absolute;left:314px;top:599px;width:44px;height:1px;background:#808080;"></div>
<div style="position:absolute;left:357px;top:583px;width:1px;height:17px;background:#808080;"></div>
<div style="position:absolute;left:314px;top:586px;width:43px;text-align:center;font:bold 12px 'Liberation Sans', sans-serif;line-height:1;white-space:pre;overflow:hidden">F</div>
<div style="position:absolute;left:358px;top:583px;width:44px;height:17px;background:#d4d0c8;"></div>
<div style="position:absolute;left:358px;top:583px;width:43px;height:1px;background:#ffffff;"></div>
<div style="position:absolute;left:358px;top:583px;width:1px;height:16px;background:#ffffff;"></div>
<div style="position:absolute;left:358px;top:599px;width:44px;height:1px;background:#808080;"></div>
<div style="position:absolute;left:401px;top:583px;width:1px;height:17px;background:#808080;"></div>
<div style="position:absolute;left:358px;top:586px;width:43px;text-align:center;font:bold 12px 'Liberation Sans', sans-serif;line-height:1;white-space:pre;overflow:hidden">G</div>
<div style="position:absolute;left:402px;top:583px;width:22px;height:17px;background:#d4d0c8;"></div>
<div style="position:absolute;left:402px;top:583px;width:21px;height:1px;background:#ffffff;"></div>
<div style="position:absolute;left:402px;top:583px;width:1px;height:16px;background:#ffffff;"></div>
<div style="position:absolute;left:402px;top:599px;width:22px;height:1px;background:#808080;"></div>
<div style="position:absolute;left:423px;top:583px;width:1px;height:17px;background:#808080;"></div>
<div style="position:absolute;left:402px;top:586px;width:21px;text-align:center;font:bold 12px 'Liberation Sans', sans-serif;line-height:1;white-space:pre;overflow:hidden">H</div>
<div style="position:absolute;left:424px;top:583px;width:22px;height:17px;background:#d4d0c8;"></div>
<div style="position:absolute;left:424px;top:583px;width:21px;height:1px;background:#ffffff;"></div>
<div style="position:absolute;left:424px;top:583px;width:1px;height:16px;background:#ffffff;"></div>
<div style="position:absolute;left:424px;top:599px;width:22px;height:1px;background:#808080;"></div>
<div style="position:absolute;left:445px;top:583px;width:1px;height:17px;background:#808080;"></div>
<div style="position:absolute;left:424px;top:586px;width:21px;text-align:center;font:bold 12px 'Liberation Sans', sans-serif;line-height:1;white-space:pre;overflow:hidden">I</div>
<div style="position:absolute;left:446px;top:583px;width:22px;height:17px;background:#d4d0c8;"></div>
<div style="position:absolute;left:446px;top:583px;width:21px;height:1px;background:#ffffff;"></div>
<div style="position:absolute;left:446px;top:583px;width:1px;height:16px;background:#ffffff;"></div>
<div style="position:absolute;left:446px;top:599px;width:22px;height:1px;background:#808080;"></div>
<div style="position:absolute;left:467px;top:583px;width:1px;height:17px;background:#808080;"></div>
<div style="position:absolute;left:446px;top:586px;width:21px;text-align:center;font:bold 12px 'Liberation Sans', sans-serif;line-height:1;white-space:pre;overflow:hidden">J</div>
<div style="position:absolute;left:468px;top:583px;width:27px;height:17px;background:#d4d0c8;"></div>
<div style="position:absolute;left:468px;top:583px;width:26px;height:1px;background:#ffffff;"></div>
<div style="position:absolute;left:468px;top:583px;width:1px;height:16px;background:#ffffff;"></div>
<div style="position:absolute;left:468px;top:599px;width:27px;height:1px;background:#808080;"></div>
<div style="position:absolute;left:494px;top:583px;width:1px;height:17px;background:#808080;"></div>
<div style="position:absolute;left:468px;top:586px;width:26px;text-align:center;font:bold 12px 'Liberation Sans', sans-serif;line-height:1;white-space:pre;overflow:hidden">K</div>
<div style="position:absolute;left:495px;top:583px;width:25px;height:17px;background:#d4d0c8;"></div>
<div style="position:absolute;left:495px;top:583px;width:24px;height:1px;background:#ffffff;"></div>
<div style="position:absolute;left:495px;top:583px;width:1px;height:16px;background:#ffffff;"></div>
<div style="position:absolute;left:495px;top:599px;width:25px;height:1px;background:#808080;"></div>
<div style="position:absolute;left:519px;top:583px;width:1px;height:17px;background:#808080;"></div>
<div style="position:absolute;left:495px;top:586px;width:24px;text-align:center;font:bold 12px 'Liberation Sans', sans-serif;line-height:1;white-space:pre;overflow:hidden">L</div>
<div style="position:absolute;left:520px;top:583px;width:17px;height:17px;background:#d4d0c8;"></div>
<div style="position:absolute;left:520px;top:583px;width:16px;height:1px;background:#ffffff;"></div>
<div style="position:absolute;left:520px;top:583px;width:1px;height:16px;background:#ffffff;"></div>
<div style="position:absolute;left:520px;top:599px;width:17px;height:1px;background:#808080;"></div>
<div style="position:absolute;left:536px;top:583px;width:1px;height:17px;background:#808080;"></div>
<div style="position:absolute;left:520px;top:586px;width:16px;text-align:center;font:bold 12px 'Liberation Sans', sans-serif;line-height:1;white-space:pre;overflow:hidden">X</div>
<div style="position:absolute;left:537px;top:583px;width:17px;height:17px;background:#d4d0c8;"></div>
<div style="position:absolute;left:537px;top:583px;width:16px;height:1px;background:#ffffff;"></div>
<div style="position:absolute;left:537px;top:583px;width:1px;height:16px;background:#ffffff;"></div>
<div style="position:absolute;left:537px;top:599px;width:17px;height:1px;background:#808080;"></div>
<div style="position:absolute;left:553px;top:583px;width:1px;height:17px;background:#808080;"></div>
<div style="position:absolute;left:537px;top:586px;width:16px;text-align:center;font:bold 12px 'Liberation Sans', sans-serif;line-height:1;white-space:pre;overflow:hidden">Y</div>
<div style="position:absolute;left:554px;top:583px;width:19px;height:17px;background:#d4d0c8;"></div>
<div style="position:absolute;left:554px;top:583px;width:18px;height:1px;background:#ffffff;"></div>
<div style="position:absolute;left:554px;top:583px;width:1px;height:16px;background:#ffffff;"></div>
<div style="position:absolute;left:554px;top:599px;width:19px;height:1px;background:#808080;"></div>
<div style="position:absolute;left:572px;top:583px;width:1px;height:17px;background:#808080;"></div>
<div style="position:absolute;left:554px;top:586px;width:18px;text-align:center;font:bold 12px 'Liberation Sans', sans-serif;line-height:1;white-space:pre;overflow:hidden">Z</div>
<div style="position:absolute;left:573px;top:583px;width:64px;height:17px;background:#d4d0c8;"></div>
<div style="position:absolute;left:573px;top:583px;width:63px;height:1px;background:#ffffff;"></div>
<div style="position:absolute;left:573px;top:583px;width:1px;height:16px;background:#ffffff;"></div>
<div style="position:absolute;left:573px;top:599px;width:64px;height:1px;background:#808080;"></div>
<div style="position:absolute;left:636px;top:583px;width:1px;height:17px;background:#808080;"></div>
<div style="position:absolute;left:573px;top:586px;width:63px;text-align:center;font:bold 12px 'Liberation Sans', sans-serif;line-height:1;white-space:pre;overflow:hidden">AA</div>
<div style="position:absolute;left:637px;top:583px;width:35px;height:17px;background:#d4d0c8;"></div>
<div style="position:absolute;left:637px;top:583px;width:34px;height:1px;background:#ffffff;"></div>
<div style="position:absolute;left:637px;top:583px;width:1px;height:16px;background:#ffffff;"></div>
<div style="position:absolute;left:637px;top:599px;width:35px;height:1px;background:#808080;"></div>
<div style="position:absolute;left:671px;top:583px;width:1px;height:17px;background:#808080;"></div>
<div style="position:absolute;left:637px;top:586px;width:34px;text-align:center;font:bold 12px 'Liberation Sans', sans-serif;line-height:1;white-space:pre;overflow:hidden">AB</div>
<div style="position:absolute;left:672px;top:583px;width:35px;height:17px;background:#d4d0c8;"></div>
<div style="position:absolute;left:672px;top:583px;width:34px;height:1px;background:#ffffff;"></div>
<div style="position:absolute;left:672px;top:583px;width:1px;height:16px;background:#ffffff;"></div>
<div style="position:absolute;left:672px;top:599px;width:35px;height:1px;background:#808080;"></div>
<div style="position:absolute;left:706px;top:583px;width:1px;height:17px;background:#808080;"></div>
<div style="position:absolute;left:672px;top:586px;width:34px;text-align:center;font:bold 12px 'Liberation Sans', sans-serif;line-height:1;white-space:pre;overflow:hidden">AC</div>
<div style="position:absolute;left:707px;top:583px;width:64px;height:17px;background:#d4d0c8;"></div>
<div style="position:absolute;left:707px;top:583px;width:63px;height:1px;background:#ffffff;"></div>
<div style="position:absolute;left:707px;top:583px;width:1px;height:16px;background:#ffffff;"></div>
<div style="position:absolute;left:707px;top:599px;width:64px;height:1px;background:#808080;"></div>
<div style="position:absolute;left:770px;top:583px;width:1px;height:17px;background:#808080;"></div>
<div style="position:absolute;left:707px;top:586px;width:63px;text-align:center;font:bold 12px 'Liberation Sans', sans-serif;line-height:1;white-space:pre;overflow:hidden">AD</div>
<div style="position:absolute;left:771px;top:583px;width:64px;height:17px;background:#d4d0c8;"></div>
<div style="position:absolute;left:771px;top:583px;width:63px;height:1px;background:#ffffff;"></div>
<div style="position:absolute;left:771px;top:583px;width:1px;height:16px;background:#ffffff;"></div>
<div style="position:absolute;left:771px;top:599px;width:64px;height:1px;background:#808080;"></div>
<div style="position:absolute;left:834px;top:583px;width:1px;height:17px;background:#808080;"></div>
<div style="position:absolute;left:771px;top:586px;width:63px;text-align:center;font:bold 12px 'Liberation Sans', sans-serif;line-height:1;white-space:pre;overflow:hidden">AE</div>
<div style="position:absolute;left:835px;top:583px;width:64px;height:17px;background:#d4d0c8;"></div>
<div style="position:absolute;left:835px;top:583px;width:63px;height:1px;background:#ffffff;"></div>
<div style="position:absolute;left:835px;top:583px;width:1px;height:16px;background:#ffffff;"></div>
<div style="position:absolute;left:835px;top:599px;width:64px;height:1px;background:#808080;"></div>
<div style="position:absolute;left:898px;top:583px;width:1px;height:17px;background:#808080;"></div>
<div style="position:absolute;left:835px;top:586px;width:63px;text-align:center;font:bold 12px 'Liberation Sans', sans-serif;line-height:1;white-space:pre;overflow:hidden">AF</div>
<div style="position:absolute;left:899px;top:583px;width:64px;height:17px;background:#d4d0c8;"></div>
<div style="position:absolute;left:899px;top:583px;width:63px;height:1px;background:#ffffff;"></div>
<div style="position:absolute;left:899px;top:583px;width:1px;height:16px;background:#ffffff;"></div>
<div style="position:absolute;left:899px;top:599px;width:64px;height:1px;background:#808080;"></div>
<div style="position:absolute;left:962px;top:583px;width:1px;height:17px;background:#808080;"></div>
<div style="position:absolute;left:899px;top:586px;width:63px;text-align:center;font:bold 12px 'Liberation Sans', sans-serif;line-height:1;white-space:pre;overflow:hidden">AG</div>
<div style="position:absolute;left:963px;top:583px;width:64px;height:17px;background:#d4d0c8;"></div>
<div style="position:absolute;left:963px;top:583px;width:63px;height:1px;background:#ffffff;"></div>
<div style="position:absolute;left:963px;top:583px;width:1px;height:16px;background:#ffffff;"></div>
<div style="position:absolute;left:963px;top:599px;width:64px;height:1px;background:#808080;"></div>
<div style="position:absolute;left:963px;top:586px;width:63px;text-align:center;font:bold 12px 'Liberation Sans', sans-serif;line-height:1;white-space:pre;overflow:hidden">AH</div>
<div style="position:absolute;left:10px;top:600px;width:43px;height:15px;background:#d4d0c8;"></div>
<div style="position:absolute;left:10px;top:600px;width:43px;height:1px;background:#ffffff;"></div>
<div style="position:absolute;left:10px;top:600px;width:1px;height:15px;background:#ffffff;"></div>
<div style="position:absolute;left:10px;top:614px;width:44px;height:1px;background:#808080;"></div>
<div style="position:absolute;left:53px;top:600px;width:1px;height:15px;background:#808080;"></div>
<div style="position:absolute;left:27.56px;top:600px;font:bold 15px 'Liberation Serif', sans-serif;color:#000;white-space:pre;line-height:1;transform:scaleX(0.8600);transform-origin:0 0;">1</div>
<div style="position:absolute;left:10px;top:615px;width:43px;height:15px;background:#d4d0c8;"></div>
<div style="position:absolute;left:10px;top:615px;width:43px;height:1px;background:#ffffff;"></div>
<div style="position:absolute;left:10px;top:615px;width:1px;height:15px;background:#ffffff;"></div>
<div style="position:absolute;left:10px;top:629px;width:44px;height:1px;background:#808080;"></div>
<div style="position:absolute;left:53px;top:615px;width:1px;height:15px;background:#808080;"></div>
<div style="position:absolute;left:27.99px;top:615px;font:bold 15px 'Liberation Serif', sans-serif;color:#000;white-space:pre;line-height:1;transform:scaleX(0.8600);transform-origin:0 0;">2</div>
<div style="position:absolute;left:10px;top:630px;width:43px;height:15px;background:#d4d0c8;"></div>
<div style="position:absolute;left:10px;top:630px;width:43px;height:1px;background:#ffffff;"></div>
<div style="position:absolute;left:10px;top:630px;width:1px;height:15px;background:#ffffff;"></div>
<div style="position:absolute;left:10px;top:644px;width:44px;height:1px;background:#808080;"></div>
<div style="position:absolute;left:53px;top:630px;width:1px;height:15px;background:#808080;"></div>
<div style="position:absolute;left:27.99px;top:630px;font:bold 15px 'Liberation Serif', sans-serif;color:#000;white-space:pre;line-height:1;transform:scaleX(0.8600);transform-origin:0 0;">3</div>
<div style="position:absolute;left:10px;top:645px;width:43px;height:15px;background:#d4d0c8;"></div>
<div style="position:absolute;left:10px;top:645px;width:43px;height:1px;background:#ffffff;"></div>
<div style="position:absolute;left:10px;top:645px;width:1px;height:15px;background:#ffffff;"></div>
<div style="position:absolute;left:10px;top:659px;width:44px;height:1px;background:#808080;"></div>
<div style="position:absolute;left:53px;top:645px;width:1px;height:15px;background:#808080;"></div>
<div style="position:absolute;left:27.56px;top:645px;font:bold 15px 'Liberation Serif', sans-serif;color:#000;white-space:pre;line-height:1;transform:scaleX(0.8600);transform-origin:0 0;">4</div>
<div style="position:absolute;left:10px;top:660px;width:43px;height:15px;background:#d4d0c8;"></div>
<div style="position:absolute;left:10px;top:660px;width:43px;height:1px;background:#ffffff;"></div>
<div style="position:absolute;left:10px;top:660px;width:1px;height:15px;background:#ffffff;"></div>
<div style="position:absolute;left:10px;top:674px;width:44px;height:1px;background:#808080;"></div>
<div style="position:absolute;left:53px;top:660px;width:1px;height:15px;background:#808080;"></div>
<div style="position:absolute;left:27.99px;top:660px;font:bold 15px 'Liberation Serif', sans-serif;color:#000;white-space:pre;line-height:1;transform:scaleX(0.8600);transform-origin:0 0;">5</div>
<div style="position:absolute;left:10px;top:675px;width:43px;height:15px;background:#d4d0c8;"></div>
<div style="position:absolute;left:10px;top:675px;width:43px;height:1px;background:#ffffff;"></div>
<div style="position:absolute;left:10px;top:675px;width:1px;height:15px;background:#ffffff;"></div>
<div style="position:absolute;left:10px;top:689px;width:44px;height:1px;background:#808080;"></div>
<div style="position:absolute;left:53px;top:675px;width:1px;height:15px;background:#808080;"></div>
<div style="position:absolute;left:27.99px;top:675px;font:bold 15px 'Liberation Serif', sans-serif;color:#000;white-space:pre;line-height:1;transform:scaleX(0.8600);transform-origin:0 0;">6</div>
<div style="position:absolute;left:10px;top:690px;width:43px;height:15px;background:#d4d0c8;"></div>
<div style="position:absolute;left:10px;top:690px;width:43px;height:1px;background:#ffffff;"></div>
<div style="position:absolute;left:10px;top:690px;width:1px;height:15px;background:#ffffff;"></div>
<div style="position:absolute;left:10px;top:704px;width:44px;height:1px;background:#808080;"></div>
<div style="position:absolute;left:53px;top:690px;width:1px;height:15px;background:#808080;"></div>
<div style="position:absolute;left:27.13px;top:690px;font:bold 15px 'Liberation Serif', sans-serif;color:#000;white-space:pre;line-height:1;transform:scaleX(0.8600);transform-origin:0 0;">7</div>
<div style="position:absolute;left:10px;top:705px;width:43px;height:15px;background:#d4d0c8;"></div>
<div style="position:absolute;left:10px;top:705px;width:43px;height:1px;background:#ffffff;"></div>
<div style="position:absolute;left:10px;top:705px;width:1px;height:15px;background:#ffffff;"></div>
<div style="position:absolute;left:10px;top:719px;width:44px;height:1px;background:#808080;"></div>
<div style="position:absolute;left:53px;top:705px;width:1px;height:15px;background:#808080;"></div>
<div style="position:absolute;left:27.99px;top:705px;font:bold 15px 'Liberation Serif', sans-serif;color:#000;white-space:pre;line-height:1;transform:scaleX(0.8600);transform-origin:0 0;">8</div>
<div style="position:absolute;left:10px;top:720px;width:43px;height:15px;background:#d4d0c8;"></div>
<div style="position:absolute;left:10px;top:720px;width:43px;height:1px;background:#ffffff;"></div>
<div style="position:absolute;left:10px;top:720px;width:1px;height:15px;background:#ffffff;"></div>
<div style="position:absolute;left:10px;top:734px;width:44px;height:1px;background:#808080;"></div>
<div style="position:absolute;left:53px;top:720px;width:1px;height:15px;background:#808080;"></div>
<div style="position:absolute;left:27.99px;top:720px;font:bold 15px 'Liberation Serif', sans-serif;color:#000;white-space:pre;line-height:1;transform:scaleX(0.8600);transform-origin:0 0;">9</div>
<div style="position:absolute;left:10px;top:735px;width:43px;height:15px;background:#d4d0c8;"></div>
<div style="position:absolute;left:10px;top:735px;width:43px;height:1px;background:#ffffff;"></div>
<div style="position:absolute;left:10px;top:735px;width:1px;height:15px;background:#ffffff;"></div>
<div style="position:absolute;left:10px;top:749px;width:44px;height:1px;background:#808080;"></div>
<div style="position:absolute;left:53px;top:735px;width:1px;height:15px;background:#808080;"></div>
<div style="position:absolute;left:24.12px;top:735px;font:bold 15px 'Liberation Serif', sans-serif;color:#000;white-space:pre;line-height:1;transform:scaleX(0.8600);transform-origin:0 0;">10</div>
<div style="position:absolute;left:10px;top:750px;width:43px;height:15px;background:#d4d0c8;"></div>
<div style="position:absolute;left:10px;top:750px;width:43px;height:1px;background:#ffffff;"></div>
<div style="position:absolute;left:10px;top:750px;width:1px;height:15px;background:#ffffff;"></div>
<div style="position:absolute;left:10px;top:764px;width:44px;height:1px;background:#808080;"></div>
<div style="position:absolute;left:53px;top:750px;width:1px;height:15px;background:#808080;"></div>
<div style="position:absolute;left:24.55px;top:750px;font:bold 15px 'Liberation Serif', sans-serif;color:#000;white-space:pre;line-height:1;transform:scaleX(0.8600);transform-origin:0 0;">11</div>
<div style="position:absolute;left:10px;top:765px;width:43px;height:15px;background:#d4d0c8;"></div>
<div style="position:absolute;left:10px;top:765px;width:43px;height:1px;background:#ffffff;"></div>
<div style="position:absolute;left:10px;top:765px;width:1px;height:15px;background:#ffffff;"></div>
<div style="position:absolute;left:10px;top:779px;width:44px;height:1px;background:#808080;"></div>
<div style="position:absolute;left:53px;top:765px;width:1px;height:15px;background:#808080;"></div>
<div style="position:absolute;left:24.12px;top:765px;font:bold 15px 'Liberation Serif', sans-serif;color:#000;white-space:pre;line-height:1;transform:scaleX(0.8600);transform-origin:0 0;">12</div>
<div style="position:absolute;left:10px;top:780px;width:43px;height:15px;background:#d4d0c8;"></div>
<div style="position:absolute;left:10px;top:780px;width:43px;height:1px;background:#ffffff;"></div>
<div style="position:absolute;left:10px;top:780px;width:1px;height:15px;background:#ffffff;"></div>
<div style="position:absolute;left:10px;top:794px;width:44px;height:1px;background:#808080;"></div>
<div style="position:absolute;left:53px;top:780px;width:1px;height:15px;background:#808080;"></div>
<div style="position:absolute;left:24.12px;top:780px;font:bold 15px 'Liberation Serif', sans-serif;color:#000;white-space:pre;line-height:1;transform:scaleX(0.8600);transform-origin:0 0;">13</div>
<div style="position:absolute;left:10px;top:795px;width:43px;height:15px;background:#d4d0c8;"></div>
<div style="position:absolute;left:10px;top:795px;width:43px;height:1px;background:#ffffff;"></div>
<div style="position:absolute;left:10px;top:795px;width:1px;height:15px;background:#ffffff;"></div>
<div style="position:absolute;left:10px;top:809px;width:44px;height:1px;background:#808080;"></div>
<div style="position:absolute;left:53px;top:795px;width:1px;height:15px;background:#808080;"></div>
<div style="position:absolute;left:24.12px;top:795px;font:bold 15px 'Liberation Serif', sans-serif;color:#000;white-space:pre;line-height:1;transform:scaleX(0.8600);transform-origin:0 0;">14</div>
<div style="position:absolute;left:10px;top:810px;width:43px;height:15px;background:#d4d0c8;"></div>
<div style="position:absolute;left:10px;top:810px;width:43px;height:1px;background:#ffffff;"></div>
<div style="position:absolute;left:10px;top:810px;width:1px;height:15px;background:#ffffff;"></div>
<div style="position:absolute;left:10px;top:824px;width:44px;height:1px;background:#808080;"></div>
<div style="position:absolute;left:53px;top:810px;width:1px;height:15px;background:#808080;"></div>
<div style="position:absolute;left:24.12px;top:810px;font:bold 15px 'Liberation Serif', sans-serif;color:#000;white-space:pre;line-height:1;transform:scaleX(0.8600);transform-origin:0 0;">15</div>
<div style="position:absolute;left:10px;top:825px;width:43px;height:3px;background:#d4d0c8;"></div>
<div style="position:absolute;left:10px;top:825px;width:43px;height:1px;background:#ffffff;"></div>
<div style="position:absolute;left:10px;top:825px;width:1px;height:3px;background:#ffffff;"></div>
<div style="position:absolute;left:53px;top:825px;width:1px;height:3px;background:#808080;"></div>
<div style="position:absolute;left:0;top:825px;width:60px;height:3px;overflow:hidden">
<div style="position:absolute;left:24.12px;top:0px;font:bold 15px 'Liberation Serif', sans-serif;color:#000;white-space:pre;line-height:1;transform:scaleX(0.8600);transform-origin:0 0;">16</div>
</div>
<div style="position:absolute;left:54px;top:614px;width:972px;height:1px;background:#c0c0c0;"></div>
<div style="position:absolute;left:54px;top:629px;width:972px;height:1px;background:#c0c0c0;"></div>
<div style="position:absolute;left:54px;top:644px;width:972px;height:1px;background:#c0c0c0;"></div>
<div style="position:absolute;left:54px;top:659px;width:972px;height:1px;background:#c0c0c0;"></div>
<div style="position:absolute;left:54px;top:674px;width:972px;height:1px;background:#c0c0c0;"></div>
<div style="position:absolute;left:54px;top:689px;width:972px;height:1px;background:#c0c0c0;"></div>
<div style="position:absolute;left:54px;top:704px;width:972px;height:1px;background:#c0c0c0;"></div>
<div style="position:absolute;left:54px;top:719px;width:972px;height:1px;background:#c0c0c0;"></div>
<div style="position:absolute;left:54px;top:734px;width:972px;height:1px;background:#c0c0c0;"></div>
<div style="position:absolute;left:54px;top:749px;width:972px;height:1px;background:#c0c0c0;"></div>
<div style="position:absolute;left:54px;top:764px;width:972px;height:1px;background:#c0c0c0;"></div>
<div style="position:absolute;left:54px;top:779px;width:972px;height:1px;background:#c0c0c0;"></div>
<div style="position:absolute;left:54px;top:794px;width:972px;height:1px;background:#c0c0c0;"></div>
<div style="position:absolute;left:54px;top:809px;width:972px;height:1px;background:#c0c0c0;"></div>
<div style="position:absolute;left:54px;top:824px;width:972px;height:1px;background:#c0c0c0;"></div>
<div style="position:absolute;left:225px;top:600px;width:1px;height:14px;background:#c0c0c0;"></div>
<div style="position:absolute;left:572px;top:600px;width:1px;height:14px;background:#c0c0c0;"></div>
<div style="position:absolute;left:636px;top:600px;width:1px;height:14px;background:#c0c0c0;"></div>
<div style="position:absolute;left:671px;top:600px;width:1px;height:14px;background:#c0c0c0;"></div>
<div style="position:absolute;left:706px;top:600px;width:1px;height:14px;background:#c0c0c0;"></div>
<div style="position:absolute;left:770px;top:600px;width:1px;height:14px;background:#c0c0c0;"></div>
<div style="position:absolute;left:834px;top:600px;width:1px;height:14px;background:#c0c0c0;"></div>
<div style="position:absolute;left:898px;top:600px;width:1px;height:14px;background:#c0c0c0;"></div>
<div style="position:absolute;left:962px;top:600px;width:1px;height:14px;background:#c0c0c0;"></div>
<div style="position:absolute;left:117px;top:615px;width:1px;height:14px;background:#c0c0c0;"></div>
<div style="position:absolute;left:181px;top:615px;width:1px;height:14px;background:#c0c0c0;"></div>
<div style="position:absolute;left:225px;top:615px;width:1px;height:14px;background:#c0c0c0;"></div>
<div style="position:absolute;left:269px;top:615px;width:1px;height:14px;background:#c0c0c0;"></div>
<div style="position:absolute;left:313px;top:615px;width:1px;height:14px;background:#c0c0c0;"></div>
<div style="position:absolute;left:357px;top:615px;width:1px;height:14px;background:#c0c0c0;"></div>
<div style="position:absolute;left:445px;top:615px;width:1px;height:14px;background:#c0c0c0;"></div>
<div style="position:absolute;left:467px;top:615px;width:1px;height:14px;background:#c0c0c0;"></div>
<div style="position:absolute;left:494px;top:615px;width:1px;height:14px;background:#c0c0c0;"></div>
<div style="position:absolute;left:519px;top:615px;width:1px;height:14px;background:#c0c0c0;"></div>
<div style="position:absolute;left:536px;top:615px;width:1px;height:14px;background:#c0c0c0;"></div>
<div style="position:absolute;left:553px;top:615px;width:1px;height:14px;background:#c0c0c0;"></div>
<div style="position:absolute;left:572px;top:615px;width:1px;height:14px;background:#c0c0c0;"></div>
<div style="position:absolute;left:636px;top:615px;width:1px;height:14px;background:#c0c0c0;"></div>
<div style="position:absolute;left:671px;top:615px;width:1px;height:14px;background:#c0c0c0;"></div>
<div style="position:absolute;left:706px;top:615px;width:1px;height:14px;background:#c0c0c0;"></div>
<div style="position:absolute;left:770px;top:615px;width:1px;height:14px;background:#c0c0c0;"></div>
<div style="position:absolute;left:834px;top:615px;width:1px;height:14px;background:#c0c0c0;"></div>
<div style="position:absolute;left:898px;top:615px;width:1px;height:14px;background:#c0c0c0;"></div>
<div style="position:absolute;left:962px;top:615px;width:1px;height:14px;background:#c0c0c0;"></div>
<div style="position:absolute;left:117px;top:630px;width:1px;height:14px;background:#c0c0c0;"></div>
<div style="position:absolute;left:181px;top:630px;width:1px;height:14px;background:#c0c0c0;"></div>
<div style="position:absolute;left:225px;top:630px;width:1px;height:14px;background:#c0c0c0;"></div>
<div style="position:absolute;left:269px;top:630px;width:1px;height:14px;background:#c0c0c0;"></div>
<div style="position:absolute;left:313px;top:630px;width:1px;height:14px;background:#c0c0c0;"></div>
<div style="position:absolute;left:357px;top:630px;width:1px;height:14px;background:#c0c0c0;"></div>
<div style="position:absolute;left:401px;top:630px;width:1px;height:14px;background:#c0c0c0;"></div>
<div style="position:absolute;left:423px;top:630px;width:1px;height:14px;background:#c0c0c0;"></div>
<div style="position:absolute;left:445px;top:630px;width:1px;height:14px;background:#c0c0c0;"></div>
<div style="position:absolute;left:467px;top:630px;width:1px;height:14px;background:#c0c0c0;"></div>
<div style="position:absolute;left:494px;top:630px;width:1px;height:14px;background:#c0c0c0;"></div>
<div style="position:absolute;left:519px;top:630px;width:1px;height:14px;background:#c0c0c0;"></div>
<div style="position:absolute;left:572px;top:630px;width:1px;height:14px;background:#c0c0c0;"></div>
<div style="position:absolute;left:636px;top:630px;width:1px;height:14px;background:#c0c0c0;"></div>
<div style="position:absolute;left:671px;top:630px;width:1px;height:14px;background:#c0c0c0;"></div>
<div style="position:absolute;left:706px;top:630px;width:1px;height:14px;background:#c0c0c0;"></div>
<div style="position:absolute;left:770px;top:630px;width:1px;height:14px;background:#c0c0c0;"></div>
<div style="position:absolute;left:834px;top:630px;width:1px;height:14px;background:#c0c0c0;"></div>
<div style="position:absolute;left:898px;top:630px;width:1px;height:14px;background:#c0c0c0;"></div>
<div style="position:absolute;left:962px;top:630px;width:1px;height:14px;background:#c0c0c0;"></div>
<div style="position:absolute;left:117px;top:645px;width:1px;height:14px;background:#c0c0c0;"></div>
<div style="position:absolute;left:181px;top:645px;width:1px;height:14px;background:#c0c0c0;"></div>
<div style="position:absolute;left:225px;top:645px;width:1px;height:14px;background:#c0c0c0;"></div>
<div style="position:absolute;left:269px;top:645px;width:1px;height:14px;background:#c0c0c0;"></div>
<div style="position:absolute;left:313px;top:645px;width:1px;height:14px;background:#c0c0c0;"></div>
<div style="position:absolute;left:357px;top:645px;width:1px;height:14px;background:#c0c0c0;"></div>
<div style="position:absolute;left:401px;top:645px;width:1px;height:14px;background:#c0c0c0;"></div>
<div style="position:absolute;left:423px;top:645px;width:1px;height:14px;background:#c0c0c0;"></div>
<div style="position:absolute;left:445px;top:645px;width:1px;height:14px;background:#c0c0c0;"></div>
<div style="position:absolute;left:467px;top:645px;width:1px;height:14px;background:#c0c0c0;"></div>
<div style="position:absolute;left:494px;top:645px;width:1px;height:14px;background:#c0c0c0;"></div>
<div style="position:absolute;left:519px;top:645px;width:1px;height:14px;background:#c0c0c0;"></div>
<div style="position:absolute;left:536px;top:645px;width:1px;height:14px;background:#c0c0c0;"></div>
<div style="position:absolute;left:553px;top:645px;width:1px;height:14px;background:#c0c0c0;"></div>
<div style="position:absolute;left:572px;top:645px;width:1px;height:14px;background:#c0c0c0;"></div>
<div style="position:absolute;left:636px;top:645px;width:1px;height:14px;background:#c0c0c0;"></div>
<div style="position:absolute;left:671px;top:645px;width:1px;height:14px;background:#c0c0c0;"></div>
<div style="position:absolute;left:706px;top:645px;width:1px;height:14px;background:#c0c0c0;"></div>
<div style="position:absolute;left:770px;top:645px;width:1px;height:14px;background:#c0c0c0;"></div>
<div style="position:absolute;left:834px;top:645px;width:1px;height:14px;background:#c0c0c0;"></div>
<div style="position:absolute;left:898px;top:645px;width:1px;height:14px;background:#c0c0c0;"></div>
<div style="position:absolute;left:962px;top:645px;width:1px;height:14px;background:#c0c0c0;"></div>
<div style="position:absolute;left:117px;top:660px;width:1px;height:14px;background:#c0c0c0;"></div>
<div style="position:absolute;left:181px;top:660px;width:1px;height:14px;background:#c0c0c0;"></div>
<div style="position:absolute;left:225px;top:660px;width:1px;height:14px;background:#c0c0c0;"></div>
<div style="position:absolute;left:269px;top:660px;width:1px;height:14px;background:#c0c0c0;"></div>
<div style="position:absolute;left:313px;top:660px;width:1px;height:14px;background:#c0c0c0;"></div>
<div style="position:absolute;left:357px;top:660px;width:1px;height:14px;background:#c0c0c0;"></div>
<div style="position:absolute;left:401px;top:660px;width:1px;height:14px;background:#c0c0c0;"></div>
<div style="position:absolute;left:423px;top:660px;width:1px;height:14px;background:#c0c0c0;"></div>
<div style="position:absolute;left:445px;top:660px;width:1px;height:14px;background:#c0c0c0;"></div>
<div style="position:absolute;left:467px;top:660px;width:1px;height:14px;background:#c0c0c0;"></div>
<div style="position:absolute;left:494px;top:660px;width:1px;height:14px;background:#c0c0c0;"></div>
<div style="position:absolute;left:519px;top:660px;width:1px;height:14px;background:#c0c0c0;"></div>
<div style="position:absolute;left:536px;top:660px;width:1px;height:14px;background:#c0c0c0;"></div>
<div style="position:absolute;left:553px;top:660px;width:1px;height:14px;background:#c0c0c0;"></div>
<div style="position:absolute;left:572px;top:660px;width:1px;height:14px;background:#c0c0c0;"></div>
<div style="position:absolute;left:636px;top:660px;width:1px;height:14px;background:#c0c0c0;"></div>
<div style="position:absolute;left:671px;top:660px;width:1px;height:14px;background:#c0c0c0;"></div>
<div style="position:absolute;left:706px;top:660px;width:1px;height:14px;background:#c0c0c0;"></div>
<div style="position:absolute;left:770px;top:660px;width:1px;height:14px;background:#c0c0c0;"></div>
<div style="position:absolute;left:834px;top:660px;width:1px;height:14px;background:#c0c0c0;"></div>
<div style="position:absolute;left:898px;top:660px;width:1px;height:14px;background:#c0c0c0;"></div>
<div style="position:absolute;left:962px;top:660px;width:1px;height:14px;background:#c0c0c0;"></div>
<div style="position:absolute;left:117px;top:675px;width:1px;height:14px;background:#c0c0c0;"></div>
<div style="position:absolute;left:181px;top:675px;width:1px;height:14px;background:#c0c0c0;"></div>
<div style="position:absolute;left:225px;top:675px;width:1px;height:14px;background:#c0c0c0;"></div>
<div style="position:absolute;left:269px;top:675px;width:1px;height:14px;background:#c0c0c0;"></div>
<div style="position:absolute;left:313px;top:675px;width:1px;height:14px;background:#c0c0c0;"></div>
<div style="position:absolute;left:357px;top:675px;width:1px;height:14px;background:#c0c0c0;"></div>
<div style="position:absolute;left:401px;top:675px;width:1px;height:14px;background:#c0c0c0;"></div>
<div style="position:absolute;left:423px;top:675px;width:1px;height:14px;background:#c0c0c0;"></div>
<div style="position:absolute;left:445px;top:675px;width:1px;height:14px;background:#c0c0c0;"></div>
<div style="position:absolute;left:467px;top:675px;width:1px;height:14px;background:#c0c0c0;"></div>
<div style="position:absolute;left:494px;top:675px;width:1px;height:14px;background:#c0c0c0;"></div>
<div style="position:absolute;left:519px;top:675px;width:1px;height:14px;background:#c0c0c0;"></div>
<div style="position:absolute;left:572px;top:675px;width:1px;height:14px;background:#c0c0c0;"></div>
<div style="position:absolute;left:636px;top:675px;width:1px;height:14px;background:#c0c0c0;"></div>
<div style="position:absolute;left:671px;top:675px;width:1px;height:14px;background:#c0c0c0;"></div>
<div style="position:absolute;left:706px;top:675px;width:1px;height:14px;background:#c0c0c0;"></div>
<div style="position:absolute;left:770px;top:675px;width:1px;height:14px;background:#c0c0c0;"></div>
<div style="position:absolute;left:834px;top:675px;width:1px;height:14px;background:#c0c0c0;"></div>
<div style="position:absolute;left:898px;top:675px;width:1px;height:14px;background:#c0c0c0;"></div>
<div style="position:absolute;left:962px;top:675px;width:1px;height:14px;background:#c0c0c0;"></div>
<div style="position:absolute;left:117px;top:690px;width:1px;height:14px;background:#c0c0c0;"></div>
<div style="position:absolute;left:181px;top:690px;width:1px;height:14px;background:#c0c0c0;"></div>
<div style="position:absolute;left:225px;top:690px;width:1px;height:14px;background:#c0c0c0;"></div>
<div style="position:absolute;left:269px;top:690px;width:1px;height:14px;background:#c0c0c0;"></div>
<div style="position:absolute;left:313px;top:690px;width:1px;height:14px;background:#c0c0c0;"></div>
<div style="position:absolute;left:357px;top:690px;width:1px;height:14px;background:#c0c0c0;"></div>
<div style="position:absolute;left:401px;top:690px;width:1px;height:14px;background:#c0c0c0;"></div>
<div style="position:absolute;left:423px;top:690px;width:1px;height:14px;background:#c0c0c0;"></div>
<div style="position:absolute;left:445px;top:690px;width:1px;height:14px;background:#c0c0c0;"></div>
<div style="position:absolute;left:467px;top:690px;width:1px;height:14px;background:#c0c0c0;"></div>
<div style="position:absolute;left:494px;top:690px;width:1px;height:14px;background:#c0c0c0;"></div>
<div style="position:absolute;left:519px;top:690px;width:1px;height:14px;background:#c0c0c0;"></div>
<div style="position:absolute;left:536px;top:690px;width:1px;height:14px;background:#c0c0c0;"></div>
<div style="position:absolute;left:553px;top:690px;width:1px;height:14px;background:#c0c0c0;"></div>
<div style="position:absolute;left:572px;top:690px;width:1px;height:14px;background:#c0c0c0;"></div>
<div style="position:absolute;left:636px;top:690px;width:1px;height:14px;background:#c0c0c0;"></div>
<div style="position:absolute;left:671px;top:690px;width:1px;height:14px;background:#c0c0c0;"></div>
<div style="position:absolute;left:706px;top:690px;width:1px;height:14px;background:#c0c0c0;"></div>
<div style="position:absolute;left:770px;top:690px;width:1px;height:14px;background:#c0c0c0;"></div>
<div style="position:absolute;left:834px;top:690px;width:1px;height:14px;background:#c0c0c0;"></div>
<div style="position:absolute;left:898px;top:690px;width:1px;height:14px;background:#c0c0c0;"></div>
<div style="position:absolute;left:962px;top:690px;width:1px;height:14px;background:#c0c0c0;"></div>
<div style="position:absolute;left:117px;top:705px;width:1px;height:14px;background:#c0c0c0;"></div>
<div style="position:absolute;left:181px;top:705px;width:1px;height:14px;background:#c0c0c0;"></div>
<div style="position:absolute;left:225px;top:705px;width:1px;height:14px;background:#c0c0c0;"></div>
<div style="position:absolute;left:269px;top:705px;width:1px;height:14px;background:#c0c0c0;"></div>
<div style="position:absolute;left:313px;top:705px;width:1px;height:14px;background:#c0c0c0;"></div>
<div style="position:absolute;left:357px;top:705px;width:1px;height:14px;background:#c0c0c0;"></div>
<div style="position:absolute;left:401px;top:705px;width:1px;height:14px;background:#c0c0c0;"></div>
<div style="position:absolute;left:423px;top:705px;width:1px;height:14px;background:#c0c0c0;"></div>
<div style="position:absolute;left:445px;top:705px;width:1px;height:14px;background:#c0c0c0;"></div>
<div style="position:absolute;left:467px;top:705px;width:1px;height:14px;background:#c0c0c0;"></div>
<div style="position:absolute;left:494px;top:705px;width:1px;height:14px;background:#c0c0c0;"></div>
<div style="position:absolute;left:519px;top:705px;width:1px;height:14px;background:#c0c0c0;"></div>
<div style="position:absolute;left:536px;top:705px;width:1px;height:14px;background:#c0c0c0;"></div>
<div style="position:absolute;left:553px;top:705px;width:1px;height:14px;background:#c0c0c0;"></div>
<div style="position:absolute;left:572px;top:705px;width:1px;height:14px;background:#c0c0c0;"></div>
<div style="position:absolute;left:636px;top:705px;width:1px;height:14px;background:#c0c0c0;"></div>
<div style="position:absolute;left:671px;top:705px;width:1px;height:14px;background:#c0c0c0;"></div>
<div style="position:absolute;left:706px;top:705px;width:1px;height:14px;background:#c0c0c0;"></div>
<div style="position:absolute;left:770px;top:705px;width:1px;height:14px;background:#c0c0c0;"></div>
<div style="position:absolute;left:834px;top:705px;width:1px;height:14px;background:#c0c0c0;"></div>
<div style="position:absolute;left:898px;top:705px;width:1px;height:14px;background:#c0c0c0;"></div>
<div style="position:absolute;left:962px;top:705px;width:1px;height:14px;background:#c0c0c0;"></div>
<div style="position:absolute;left:117px;top:720px;width:1px;height:14px;background:#c0c0c0;"></div>
<div style="position:absolute;left:181px;top:720px;width:1px;height:14px;background:#c0c0c0;"></div>
<div style="position:absolute;left:225px;top:720px;width:1px;height:14px;background:#c0c0c0;"></div>
<div style="position:absolute;left:269px;top:720px;width:1px;height:14px;background:#c0c0c0;"></div>
<div style="position:absolute;left:313px;top:720px;width:1px;height:14px;background:#c0c0c0;"></div>
<div style="position:absolute;left:357px;top:720px;width:1px;height:14px;background:#c0c0c0;"></div>
<div style="position:absolute;left:401px;top:720px;width:1px;height:14px;background:#c0c0c0;"></div>
<div style="position:absolute;left:423px;top:720px;width:1px;height:14px;background:#c0c0c0;"></div>
<div style="position:absolute;left:445px;top:720px;width:1px;height:14px;background:#c0c0c0;"></div>
<div style="position:absolute;left:467px;top:720px;width:1px;height:14px;background:#c0c0c0;"></div>
<div style="position:absolute;left:494px;top:720px;width:1px;height:14px;background:#c0c0c0;"></div>
<div style="position:absolute;left:519px;top:720px;width:1px;height:14px;background:#c0c0c0;"></div>
<div style="position:absolute;left:536px;top:720px;width:1px;height:14px;background:#c0c0c0;"></div>
<div style="position:absolute;left:553px;top:720px;width:1px;height:14px;background:#c0c0c0;"></div>
<div style="position:absolute;left:572px;top:720px;width:1px;height:14px;background:#c0c0c0;"></div>
<div style="position:absolute;left:636px;top:720px;width:1px;height:14px;background:#c0c0c0;"></div>
<div style="position:absolute;left:671px;top:720px;width:1px;height:14px;background:#c0c0c0;"></div>
<div style="position:absolute;left:706px;top:720px;width:1px;height:14px;background:#c0c0c0;"></div>
<div style="position:absolute;left:770px;top:720px;width:1px;height:14px;background:#c0c0c0;"></div>
<div style="position:absolute;left:834px;top:720px;width:1px;height:14px;background:#c0c0c0;"></div>
<div style="position:absolute;left:898px;top:720px;width:1px;height:14px;background:#c0c0c0;"></div>
<div style="position:absolute;left:962px;top:720px;width:1px;height:14px;background:#c0c0c0;"></div>
<div style="position:absolute;left:117px;top:735px;width:1px;height:14px;background:#c0c0c0;"></div>
<div style="position:absolute;left:181px;top:735px;width:1px;height:14px;background:#c0c0c0;"></div>
<div style="position:absolute;left:225px;top:735px;width:1px;height:14px;background:#c0c0c0;"></div>
<div style="position:absolute;left:269px;top:735px;width:1px;height:14px;background:#c0c0c0;"></div>
<div style="position:absolute;left:313px;top:735px;width:1px;height:14px;background:#c0c0c0;"></div>
<div style="position:absolute;left:357px;top:735px;width:1px;height:14px;background:#c0c0c0;"></div>
<div style="position:absolute;left:401px;top:735px;width:1px;height:14px;background:#c0c0c0;"></div>
<div style="position:absolute;left:423px;top:735px;width:1px;height:14px;background:#c0c0c0;"></div>
<div style="position:absolute;left:445px;top:735px;width:1px;height:14px;background:#c0c0c0;"></div>
<div style="position:absolute;left:467px;top:735px;width:1px;height:14px;background:#c0c0c0;"></div>
<div style="position:absolute;left:494px;top:735px;width:1px;height:14px;background:#c0c0c0;"></div>
<div style="position:absolute;left:519px;top:735px;width:1px;height:14px;background:#c0c0c0;"></div>
<div style="position:absolute;left:536px;top:735px;width:1px;height:14px;background:#c0c0c0;"></div>
<div style="position:absolute;left:553px;top:735px;width:1px;height:14px;background:#c0c0c0;"></div>
<div style="position:absolute;left:572px;top:735px;width:1px;height:14px;background:#c0c0c0;"></div>
<div style="position:absolute;left:636px;top:735px;width:1px;height:14px;background:#c0c0c0;"></div>
<div style="position:absolute;left:671px;top:735px;width:1px;height:14px;background:#c0c0c0;"></div>
<div style="position:absolute;left:706px;top:735px;width:1px;height:14px;background:#c0c0c0;"></div>
<div style="position:absolute;left:770px;top:735px;width:1px;height:14px;background:#c0c0c0;"></div>
<div style="position:absolute;left:834px;top:735px;width:1px;height:14px;background:#c0c0c0;"></div>
<div style="position:absolute;left:898px;top:735px;width:1px;height:14px;background:#c0c0c0;"></div>
<div style="position:absolute;left:962px;top:735px;width:1px;height:14px;background:#c0c0c0;"></div>
<div style="position:absolute;left:117px;top:750px;width:1px;height:14px;background:#c0c0c0;"></div>
<div style="position:absolute;left:181px;top:750px;width:1px;height:14px;background:#c0c0c0;"></div>
<div style="position:absolute;left:225px;top:750px;width:1px;height:14px;background:#c0c0c0;"></div>
<div style="position:absolute;left:269px;top:750px;width:1px;height:14px;background:#c0c0c0;"></div>
<div style="position:absolute;left:313px;top:750px;width:1px;height:14px;background:#c0c0c0;"></div>
<div style="position:absolute;left:357px;top:750px;width:1px;height:14px;background:#c0c0c0;"></div>
<div style="position:absolute;left:401px;top:750px;width:1px;height:14px;background:#c0c0c0;"></div>
<div style="position:absolute;left:423px;top:750px;width:1px;height:14px;background:#c0c0c0;"></div>
<div style="position:absolute;left:445px;top:750px;width:1px;height:14px;background:#c0c0c0;"></div>
<div style="position:absolute;left:467px;top:750px;width:1px;height:14px;background:#c0c0c0;"></div>
<div style="position:absolute;left:494px;top:750px;width:1px;height:14px;background:#c0c0c0;"></div>
<div style="position:absolute;left:519px;top:750px;width:1px;height:14px;background:#c0c0c0;"></div>
<div style="position:absolute;left:536px;top:750px;width:1px;height:14px;background:#c0c0c0;"></div>
<div style="position:absolute;left:553px;top:750px;width:1px;height:14px;background:#c0c0c0;"></div>
<div style="position:absolute;left:572px;top:750px;width:1px;height:14px;background:#c0c0c0;"></div>
<div style="position:absolute;left:636px;top:750px;width:1px;height:14px;background:#c0c0c0;"></div>
<div style="position:absolute;left:671px;top:750px;width:1px;height:14px;background:#c0c0c0;"></div>
<div style="position:absolute;left:706px;top:750px;width:1px;height:14px;background:#c0c0c0;"></div>
<div style="position:absolute;left:770px;top:750px;width:1px;height:14px;background:#c0c0c0;"></div>
<div style="position:absolute;left:834px;top:750px;width:1px;height:14px;background:#c0c0c0;"></div>
<div style="position:absolute;left:898px;top:750px;width:1px;height:14px;background:#c0c0c0;"></div>
<div style="position:absolute;left:962px;top:750px;width:1px;height:14px;background:#c0c0c0;"></div>
<div style="position:absolute;left:117px;top:765px;width:1px;height:14px;background:#c0c0c0;"></div>
<div style="position:absolute;left:181px;top:765px;width:1px;height:14px;background:#c0c0c0;"></div>
<div style="position:absolute;left:225px;top:765px;width:1px;height:14px;background:#c0c0c0;"></div>
<div style="position:absolute;left:269px;top:765px;width:1px;height:14px;background:#c0c0c0;"></div>
<div style="position:absolute;left:313px;top:765px;width:1px;height:14px;background:#c0c0c0;"></div>
<div style="position:absolute;left:357px;top:765px;width:1px;height:14px;background:#c0c0c0;"></div>
<div style="position:absolute;left:401px;top:765px;width:1px;height:14px;background:#c0c0c0;"></div>
<div style="position:absolute;left:423px;top:765px;width:1px;height:14px;background:#c0c0c0;"></div>
<div style="position:absolute;left:445px;top:765px;width:1px;height:14px;background:#c0c0c0;"></div>
<div style="position:absolute;left:467px;top:765px;width:1px;height:14px;background:#c0c0c0;"></div>
<div style="position:absolute;left:494px;top:765px;width:1px;height:14px;background:#c0c0c0;"></div>
<div style="position:absolute;left:519px;top:765px;width:1px;height:14px;background:#c0c0c0;"></div>
<div style="position:absolute;left:536px;top:765px;width:1px;height:14px;background:#c0c0c0;"></div>
<div style="position:absolute;left:553px;top:765px;width:1px;height:14px;background:#c0c0c0;"></div>
<div style="position:absolute;left:572px;top:765px;width:1px;height:14px;background:#c0c0c0;"></div>
<div style="position:absolute;left:636px;top:765px;width:1px;height:14px;background:#c0c0c0;"></div>
<div style="position:absolute;left:671px;top:765px;width:1px;height:14px;background:#c0c0c0;"></div>
<div style="position:absolute;left:706px;top:765px;width:1px;height:14px;background:#c0c0c0;"></div>
<div style="position:absolute;left:770px;top:765px;width:1px;height:14px;background:#c0c0c0;"></div>
<div style="position:absolute;left:834px;top:765px;width:1px;height:14px;background:#c0c0c0;"></div>
<div style="position:absolute;left:898px;top:765px;width:1px;height:14px;background:#c0c0c0;"></div>
<div style="position:absolute;left:962px;top:765px;width:1px;height:14px;background:#c0c0c0;"></div>
<div style="position:absolute;left:117px;top:780px;width:1px;height:14px;background:#c0c0c0;"></div>
<div style="position:absolute;left:181px;top:780px;width:1px;height:14px;background:#c0c0c0;"></div>
<div style="position:absolute;left:225px;top:780px;width:1px;height:14px;background:#c0c0c0;"></div>
<div style="position:absolute;left:269px;top:780px;width:1px;height:14px;background:#c0c0c0;"></div>
<div style="position:absolute;left:313px;top:780px;width:1px;height:14px;background:#c0c0c0;"></div>
<div style="position:absolute;left:357px;top:780px;width:1px;height:14px;background:#c0c0c0;"></div>
<div style="position:absolute;left:401px;top:780px;width:1px;height:14px;background:#c0c0c0;"></div>
<div style="position:absolute;left:423px;top:780px;width:1px;height:14px;background:#c0c0c0;"></div>
<div style="position:absolute;left:445px;top:780px;width:1px;height:14px;background:#c0c0c0;"></div>
<div style="position:absolute;left:467px;top:780px;width:1px;height:14px;background:#c0c0c0;"></div>
<div style="position:absolute;left:494px;top:780px;width:1px;height:14px;background:#c0c0c0;"></div>
<div style="position:absolute;left:519px;top:780px;width:1px;height:14px;background:#c0c0c0;"></div>
<div style="position:absolute;left:536px;top:780px;width:1px;height:14px;background:#c0c0c0;"></div>
<div style="position:absolute;left:553px;top:780px;width:1px;height:14px;background:#c0c0c0;"></div>
<div style="position:absolute;left:572px;top:780px;width:1px;height:14px;background:#c0c0c0;"></div>
<div style="position:absolute;left:636px;top:780px;width:1px;height:14px;background:#c0c0c0;"></div>
<div style="position:absolute;left:671px;top:780px;width:1px;height:14px;background:#c0c0c0;"></div>
<div style="position:absolute;left:706px;top:780px;width:1px;height:14px;background:#c0c0c0;"></div>
<div style="position:absolute;left:770px;top:780px;width:1px;height:14px;background:#c0c0c0;"></div>
<div style="position:absolute;left:834px;top:780px;width:1px;height:14px;background:#c0c0c0;"></div>
<div style="position:absolute;left:898px;top:780px;width:1px;height:14px;background:#c0c0c0;"></div>
<div style="position:absolute;left:962px;top:780px;width:1px;height:14px;background:#c0c0c0;"></div>
<div style="position:absolute;left:117px;top:795px;width:1px;height:14px;background:#c0c0c0;"></div>
<div style="position:absolute;left:181px;top:795px;width:1px;height:14px;background:#c0c0c0;"></div>
<div style="position:absolute;left:225px;top:795px;width:1px;height:14px;background:#c0c0c0;"></div>
<div style="position:absolute;left:269px;top:795px;width:1px;height:14px;background:#c0c0c0;"></div>
<div style="position:absolute;left:313px;top:795px;width:1px;height:14px;background:#c0c0c0;"></div>
<div style="position:absolute;left:357px;top:795px;width:1px;height:14px;background:#c0c0c0;"></div>
<div style="position:absolute;left:401px;top:795px;width:1px;height:14px;background:#c0c0c0;"></div>
<div style="position:absolute;left:423px;top:795px;width:1px;height:14px;background:#c0c0c0;"></div>
<div style="position:absolute;left:445px;top:795px;width:1px;height:14px;background:#c0c0c0;"></div>
<div style="position:absolute;left:467px;top:795px;width:1px;height:14px;background:#c0c0c0;"></div>
<div style="position:absolute;left:494px;top:795px;width:1px;height:14px;background:#c0c0c0;"></div>
<div style="position:absolute;left:519px;top:795px;width:1px;height:14px;background:#c0c0c0;"></div>
<div style="position:absolute;left:536px;top:795px;width:1px;height:14px;background:#c0c0c0;"></div>
<div style="position:absolute;left:553px;top:795px;width:1px;height:14px;background:#c0c0c0;"></div>
<div style="position:absolute;left:572px;top:795px;width:1px;height:14px;background:#c0c0c0;"></div>
<div style="position:absolute;left:636px;top:795px;width:1px;height:14px;background:#c0c0c0;"></div>
<div style="position:absolute;left:671px;top:795px;width:1px;height:14px;background:#c0c0c0;"></div>
<div style="position:absolute;left:706px;top:795px;width:1px;height:14px;background:#c0c0c0;"></div>
<div style="position:absolute;left:770px;top:795px;width:1px;height:14px;background:#c0c0c0;"></div>
<div style="position:absolute;left:834px;top:795px;width:1px;height:14px;background:#c0c0c0;"></div>
<div style="position:absolute;left:898px;top:795px;width:1px;height:14px;background:#c0c0c0;"></div>
<div style="position:absolute;left:962px;top:795px;width:1px;height:14px;background:#c0c0c0;"></div>
<div style="position:absolute;left:117px;top:810px;width:1px;height:14px;background:#c0c0c0;"></div>
<div style="position:absolute;left:181px;top:810px;width:1px;height:14px;background:#c0c0c0;"></div>
<div style="position:absolute;left:225px;top:810px;width:1px;height:14px;background:#c0c0c0;"></div>
<div style="position:absolute;left:269px;top:810px;width:1px;height:14px;background:#c0c0c0;"></div>
<div style="position:absolute;left:313px;top:810px;width:1px;height:14px;background:#c0c0c0;"></div>
<div style="position:absolute;left:357px;top:810px;width:1px;height:14px;background:#c0c0c0;"></div>
<div style="position:absolute;left:401px;top:810px;width:1px;height:14px;background:#c0c0c0;"></div>
<div style="position:absolute;left:423px;top:810px;width:1px;height:14px;background:#c0c0c0;"></div>
<div style="position:absolute;left:445px;top:810px;width:1px;height:14px;background:#c0c0c0;"></div>
<div style="position:absolute;left:467px;top:810px;width:1px;height:14px;background:#c0c0c0;"></div>
<div style="position:absolute;left:494px;top:810px;width:1px;height:14px;background:#c0c0c0;"></div>
<div style="position:absolute;left:519px;top:810px;width:1px;height:14px;background:#c0c0c0;"></div>
<div style="position:absolute;left:536px;top:810px;width:1px;height:14px;background:#c0c0c0;"></div>
<div style="position:absolute;left:553px;top:810px;width:1px;height:14px;background:#c0c0c0;"></div>
<div style="position:absolute;left:572px;top:810px;width:1px;height:14px;background:#c0c0c0;"></div>
<div style="position:absolute;left:636px;top:810px;width:1px;height:14px;background:#c0c0c0;"></div>
<div style="position:absolute;left:671px;top:810px;width:1px;height:14px;background:#c0c0c0;"></div>
<div style="position:absolute;left:706px;top:810px;width:1px;height:14px;background:#c0c0c0;"></div>
<div style="position:absolute;left:770px;top:810px;width:1px;height:14px;background:#c0c0c0;"></div>
<div style="position:absolute;left:834px;top:810px;width:1px;height:14px;background:#c0c0c0;"></div>
<div style="position:absolute;left:898px;top:810px;width:1px;height:14px;background:#c0c0c0;"></div>
<div style="position:absolute;left:962px;top:810px;width:1px;height:14px;background:#c0c0c0;"></div>
<div style="position:absolute;left:117px;top:825px;width:1px;height:3px;background:#c0c0c0;"></div>
<div style="position:absolute;left:181px;top:825px;width:1px;height:3px;background:#c0c0c0;"></div>
<div style="position:absolute;left:225px;top:825px;width:1px;height:3px;background:#c0c0c0;"></div>
<div style="position:absolute;left:269px;top:825px;width:1px;height:3px;background:#c0c0c0;"></div>
<div style="position:absolute;left:313px;top:825px;width:1px;height:3px;background:#c0c0c0;"></div>
<div style="position:absolute;left:357px;top:825px;width:1px;height:3px;background:#c0c0c0;"></div>
<div style="position:absolute;left:401px;top:825px;width:1px;height:3px;background:#c0c0c0;"></div>
<div style="position:absolute;left:423px;top:825px;width:1px;height:3px;background:#c0c0c0;"></div>
<div style="position:absolute;left:445px;top:825px;width:1px;height:3px;background:#c0c0c0;"></div>
<div style="position:absolute;left:467px;top:825px;width:1px;height:3px;background:#c0c0c0;"></div>
<div style="position:absolute;left:494px;top:825px;width:1px;height:3px;background:#c0c0c0;"></div>
<div style="position:absolute;left:519px;top:825px;width:1px;height:3px;background:#c0c0c0;"></div>
<div style="position:absolute;left:536px;top:825px;width:1px;height:3px;background:#c0c0c0;"></div>
<div style="position:absolute;left:553px;top:825px;width:1px;height:3px;background:#c0c0c0;"></div>
<div style="position:absolute;left:572px;top:825px;width:1px;height:3px;background:#c0c0c0;"></div>
<div style="position:absolute;left:636px;top:825px;width:1px;height:3px;background:#c0c0c0;"></div>
<div style="position:absolute;left:671px;top:825px;width:1px;height:3px;background:#c0c0c0;"></div>
<div style="position:absolute;left:706px;top:825px;width:1px;height:3px;background:#c0c0c0;"></div>
<div style="position:absolute;left:770px;top:825px;width:1px;height:3px;background:#c0c0c0;"></div>
<div style="position:absolute;left:834px;top:825px;width:1px;height:3px;background:#c0c0c0;"></div>
<div style="position:absolute;left:898px;top:825px;width:1px;height:3px;background:#c0c0c0;"></div>
<div style="position:absolute;left:962px;top:825px;width:1px;height:3px;background:#c0c0c0;"></div>
<div style="position:absolute;left:56.0px;top:602px;font:normal 11px 'Liberation Sans', sans-serif;color:#000;white-space:pre;line-height:1;transform:scaleX(0.9506);transform-origin:0 0;">YM-200606-ECBOT  10 min  - #1</div>
<div style="position:absolute;left:226px;top:600px;width:346px;height:14px;overflow:hidden">
<div style="position:absolute;left:1.02px;top:2px;font:normal 11px 'Liberation Sans', sans-serif;color:#000;white-space:pre;line-height:1;transform:scaleX(0.9843);transform-origin:0 0;">Formula Source Sheet #1.  Enter and modify formulas for this sheet on Sheet1</div>
</div>
<div style="position:absolute;left:573.0px;top:602px;font:normal 11px 'Liberation Sans', sans-serif;color:#000;white-space:pre;line-height:1;transform:scaleX(1.0000);transform-origin:0 0;">RSI</div>
<div style="position:absolute;left:573.0px;top:617px;font:normal 11px 'Liberation Sans', sans-serif;color:#000;white-space:pre;line-height:1;transform:scaleX(1.0000);transform-origin:0 0;">RSI</div>
<div style="position:absolute;left:55.04px;top:617px;font:normal 11px 'Liberation Sans', sans-serif;color:#000;white-space:pre;line-height:1;transform:scaleX(0.9592);transform-origin:0 0;">Date Time</div>
<div style="position:absolute;left:120.0px;top:617px;font:normal 11px 'Liberation Sans', sans-serif;color:#000;white-space:pre;line-height:1;transform:scaleX(0.9630);transform-origin:0 0;">Open</div>
<div style="position:absolute;left:183.0px;top:617px;font:normal 11px 'Liberation Sans', sans-serif;color:#000;white-space:pre;line-height:1;transform:scaleX(1.0000);transform-origin:0 0;">High</div>
<div style="position:absolute;left:226.84px;top:617px;font:normal 11px 'Liberation Sans', sans-serif;color:#000;white-space:pre;line-height:1;transform:scaleX(1.1579);transform-origin:0 0;">Low</div>
<div style="position:absolute;left:269.9px;top:617px;font:normal 11px 'Liberation Sans', sans-serif;color:#000;white-space:pre;line-height:1;transform:scaleX(1.1000);transform-origin:0 0;">Last</div>
<div style="position:absolute;left:317.0px;top:617px;font:normal 11px 'Liberation Sans', sans-serif;color:#000;white-space:pre;line-height:1;transform:scaleX(0.9459);transform-origin:0 0;">Volume</div>
<div style="position:absolute;left:359.0px;top:617px;font:normal 11px 'Liberation Sans', sans-serif;color:#000;white-space:pre;line-height:1;transform:scaleX(1.0133);transform-origin:0 0;"># of Trades / OI</div>
<div style="position:absolute;left:638.04px;top:617px;font:normal 11px 'Liberation Sans', sans-serif;color:#000;white-space:pre;line-height:1;transform:scaleX(0.9615);transform-origin:0 0;">Line1</div>
<div style="position:absolute;left:673.0px;top:617px;font:normal 11px 'Liberation Sans', sans-serif;color:#000;white-space:pre;line-height:1;transform:scaleX(1.0000);transform-origin:0 0;">Line2</div>
<div style="position:absolute;left:706.95px;top:617px;font:normal 11px 'Liberation Sans', sans-serif;color:#000;white-space:pre;line-height:1;transform:scaleX(1.0526);transform-origin:0 0;">RSI Avg</div>
<div style="position:absolute;left:54px;top:632px;width:61px;text-align:right;font:11px 'Liberation Sans', sans-serif;line-height:1;white-space:pre">38827.6389</div>
<div style="position:absolute;left:118px;top:632px;width:61px;text-align:right;font:11px 'Liberation Sans', sans-serif;line-height:1;white-space:pre">11327</div>
<div style="position:absolute;left:182px;top:632px;width:41px;text-align:right;font:11px 'Liberation Sans', sans-serif;line-height:1;white-space:pre">11328</div>
<div style="position:absolute;left:226px;top:632px;width:41px;text-align:right;font:11px 'Liberation Sans', sans-serif;line-height:1;white-space:pre">11325</div>
<div style="position:absolute;left:270px;top:632px;width:41px;text-align:right;font:11px 'Liberation Sans', sans-serif;line-height:1;white-space:pre">11328</div>
<div style="position:absolute;left:314px;top:632px;width:41px;text-align:right;font:11px 'Liberation Sans', sans-serif;line-height:1;white-space:pre">15</div>
<div style="position:absolute;left:358px;top:632px;width:41px;text-align:right;font:11px 'Liberation Sans', sans-serif;line-height:1;white-space:pre">21</div>
<div style="position:absolute;left:468px;top:632px;width:24px;text-align:right;font:11px 'Liberation Sans', sans-serif;line-height:1;white-space:pre">0</div>
<div style="position:absolute;left:573px;top:632px;width:61px;text-align:right;font:11px 'Liberation Sans', sans-serif;line-height:1;white-space:pre">33.3333321</div>
<div style="position:absolute;left:707px;top:632px;width:61px;text-align:right;font:11px 'Liberation Sans', sans-serif;line-height:1;white-space:pre">41.5343933</div>
<div style="position:absolute;left:637px;top:632px;width:32px;text-align:right;font:11px 'Liberation Sans', sans-serif;line-height:1;white-space:pre">70</div>
<div style="position:absolute;left:672px;top:632px;width:32px;text-align:right;font:11px 'Liberation Sans', sans-serif;line-height:1;white-space:pre">30</div>
<div style="position:absolute;left:54px;top:647px;width:61px;text-align:right;font:11px 'Liberation Sans', sans-serif;line-height:1;white-space:pre">38827.6319</div>
<div style="position:absolute;left:118px;top:647px;width:61px;text-align:right;font:11px 'Liberation Sans', sans-serif;line-height:1;white-space:pre">11332</div>
<div style="position:absolute;left:182px;top:647px;width:41px;text-align:right;font:11px 'Liberation Sans', sans-serif;line-height:1;white-space:pre">11332</div>
<div style="position:absolute;left:226px;top:647px;width:41px;text-align:right;font:11px 'Liberation Sans', sans-serif;line-height:1;white-space:pre">11325</div>
<div style="position:absolute;left:270px;top:647px;width:41px;text-align:right;font:11px 'Liberation Sans', sans-serif;line-height:1;white-space:pre">11326</div>
<div style="position:absolute;left:314px;top:647px;width:41px;text-align:right;font:11px 'Liberation Sans', sans-serif;line-height:1;white-space:pre">185</div>
<div style="position:absolute;left:358px;top:647px;width:41px;text-align:right;font:11px 'Liberation Sans', sans-serif;line-height:1;white-space:pre">119</div>
<div style="position:absolute;left:468px;top:647px;width:24px;text-align:right;font:11px 'Liberation Sans', sans-serif;line-height:1;white-space:pre">0</div>
<div style="position:absolute;left:573px;top:647px;width:61px;text-align:right;font:11px 'Liberation Sans', sans-serif;line-height:1;white-space:pre">35.7142868</div>
<div style="position:absolute;left:707px;top:647px;width:61px;text-align:right;font:11px 'Liberation Sans', sans-serif;line-height:1;white-space:pre">47.0899467</div>
<div style="position:absolute;left:637px;top:647px;width:32px;text-align:right;font:11px 'Liberation Sans', sans-serif;line-height:1;white-space:pre">70</div>
<div style="position:absolute;left:672px;top:647px;width:32px;text-align:right;font:11px 'Liberation Sans', sans-serif;line-height:1;white-space:pre">30</div>
<div style="position:absolute;left:54px;top:662px;width:61px;text-align:right;font:11px 'Liberation Sans', sans-serif;line-height:1;white-space:pre">38827.625</div>
<div style="position:absolute;left:118px;top:662px;width:61px;text-align:right;font:11px 'Liberation Sans', sans-serif;line-height:1;white-space:pre">11335</div>
<div style="position:absolute;left:182px;top:662px;width:41px;text-align:right;font:11px 'Liberation Sans', sans-serif;line-height:1;white-space:pre">11336</div>
<div style="position:absolute;left:226px;top:662px;width:41px;text-align:right;font:11px 'Liberation Sans', sans-serif;line-height:1;white-space:pre">11331</div>
<div style="position:absolute;left:270px;top:662px;width:41px;text-align:right;font:11px 'Liberation Sans', sans-serif;line-height:1;white-space:pre">11332</div>
<div style="position:absolute;left:314px;top:662px;width:41px;text-align:right;font:11px 'Liberation Sans', sans-serif;line-height:1;white-space:pre">127</div>
<div style="position:absolute;left:358px;top:662px;width:41px;text-align:right;font:11px 'Liberation Sans', sans-serif;line-height:1;white-space:pre">82</div>
<div style="position:absolute;left:468px;top:662px;width:24px;text-align:right;font:11px 'Liberation Sans', sans-serif;line-height:1;white-space:pre">0</div>
<div style="position:absolute;left:573px;top:662px;width:61px;text-align:right;font:11px 'Liberation Sans', sans-serif;line-height:1;white-space:pre">55.5555573</div>
<div style="position:absolute;left:707px;top:662px;width:61px;text-align:right;font:11px 'Liberation Sans', sans-serif;line-height:1;white-space:pre">52.3894882</div>
<div style="position:absolute;left:637px;top:662px;width:32px;text-align:right;font:11px 'Liberation Sans', sans-serif;line-height:1;white-space:pre">70</div>
<div style="position:absolute;left:672px;top:662px;width:32px;text-align:right;font:11px 'Liberation Sans', sans-serif;line-height:1;white-space:pre">30</div>
<div style="position:absolute;left:54px;top:677px;width:61px;text-align:right;font:11px 'Liberation Sans', sans-serif;line-height:1;white-space:pre">38827.6181</div>
<div style="position:absolute;left:118px;top:677px;width:61px;text-align:right;font:11px 'Liberation Sans', sans-serif;line-height:1;white-space:pre">11336</div>
<div style="position:absolute;left:182px;top:677px;width:41px;text-align:right;font:11px 'Liberation Sans', sans-serif;line-height:1;white-space:pre">11338</div>
<div style="position:absolute;left:226px;top:677px;width:41px;text-align:right;font:11px 'Liberation Sans', sans-serif;line-height:1;white-space:pre">11335</div>
<div style="position:absolute;left:270px;top:677px;width:41px;text-align:right;font:11px 'Liberation Sans', sans-serif;line-height:1;white-space:pre">11335</div>
<div style="position:absolute;left:314px;top:677px;width:41px;text-align:right;font:11px 'Liberation Sans', sans-serif;line-height:1;white-space:pre">67</div>
<div style="position:absolute;left:358px;top:677px;width:41px;text-align:right;font:11px 'Liberation Sans', sans-serif;line-height:1;white-space:pre">28</div>
<div style="position:absolute;left:468px;top:677px;width:24px;text-align:right;font:11px 'Liberation Sans', sans-serif;line-height:1;white-space:pre">0</div>
<div style="position:absolute;left:573px;top:677px;width:61px;text-align:right;font:11px 'Liberation Sans', sans-serif;line-height:1;white-space:pre">50</div>
<div style="position:absolute;left:707px;top:677px;width:61px;text-align:right;font:11px 'Liberation Sans', sans-serif;line-height:1;white-space:pre">50.5376358</div>
<div style="position:absolute;left:637px;top:677px;width:32px;text-align:right;font:11px 'Liberation Sans', sans-serif;line-height:1;white-space:pre">70</div>
<div style="position:absolute;left:672px;top:677px;width:32px;text-align:right;font:11px 'Liberation Sans', sans-serif;line-height:1;white-space:pre">30</div>
<div style="position:absolute;left:54px;top:692px;width:61px;text-align:right;font:11px 'Liberation Sans', sans-serif;line-height:1;white-space:pre">38827.6111</div>
<div style="position:absolute;left:118px;top:692px;width:61px;text-align:right;font:11px 'Liberation Sans', sans-serif;line-height:1;white-space:pre">11336</div>
<div style="position:absolute;left:182px;top:692px;width:41px;text-align:right;font:11px 'Liberation Sans', sans-serif;line-height:1;white-space:pre">11339</div>
<div style="position:absolute;left:226px;top:692px;width:41px;text-align:right;font:11px 'Liberation Sans', sans-serif;line-height:1;white-space:pre">11334</div>
<div style="position:absolute;left:270px;top:692px;width:41px;text-align:right;font:11px 'Liberation Sans', sans-serif;line-height:1;white-space:pre">11335</div>
<div style="position:absolute;left:314px;top:692px;width:41px;text-align:right;font:11px 'Liberation Sans', sans-serif;line-height:1;white-space:pre">92</div>
<div style="position:absolute;left:358px;top:692px;width:41px;text-align:right;font:11px 'Liberation Sans', sans-serif;line-height:1;white-space:pre">0</div>
<div style="position:absolute;left:468px;top:692px;width:24px;text-align:right;font:11px 'Liberation Sans', sans-serif;line-height:1;white-space:pre">0</div>
<div style="position:absolute;left:573px;top:692px;width:61px;text-align:right;font:11px 'Liberation Sans', sans-serif;line-height:1;white-space:pre">51.6129036</div>
<div style="position:absolute;left:707px;top:692px;width:61px;text-align:right;font:11px 'Liberation Sans', sans-serif;line-height:1;white-space:pre">52.3894882</div>
<div style="position:absolute;left:637px;top:692px;width:32px;text-align:right;font:11px 'Liberation Sans', sans-serif;line-height:1;white-space:pre">70</div>
<div style="position:absolute;left:672px;top:692px;width:32px;text-align:right;font:11px 'Liberation Sans', sans-serif;line-height:1;white-space:pre">30</div>
<div style="position:absolute;left:54px;top:707px;width:61px;text-align:right;font:11px 'Liberation Sans', sans-serif;line-height:1;white-space:pre">38827.6042</div>
<div style="position:absolute;left:118px;top:707px;width:61px;text-align:right;font:11px 'Liberation Sans', sans-serif;line-height:1;white-space:pre">11339</div>
<div style="position:absolute;left:182px;top:707px;width:41px;text-align:right;font:11px 'Liberation Sans', sans-serif;line-height:1;white-space:pre">11341</div>
<div style="position:absolute;left:226px;top:707px;width:41px;text-align:right;font:11px 'Liberation Sans', sans-serif;line-height:1;white-space:pre">11336</div>
<div style="position:absolute;left:270px;top:707px;width:41px;text-align:right;font:11px 'Liberation Sans', sans-serif;line-height:1;white-space:pre">11338</div>
<div style="position:absolute;left:314px;top:707px;width:41px;text-align:right;font:11px 'Liberation Sans', sans-serif;line-height:1;white-space:pre">233</div>
<div style="position:absolute;left:358px;top:707px;width:41px;text-align:right;font:11px 'Liberation Sans', sans-serif;line-height:1;white-space:pre">0</div>
<div style="position:absolute;left:468px;top:707px;width:24px;text-align:right;font:11px 'Liberation Sans', sans-serif;line-height:1;white-space:pre">0</div>
<div style="position:absolute;left:573px;top:707px;width:61px;text-align:right;font:11px 'Liberation Sans', sans-serif;line-height:1;white-space:pre">50</div>
<div style="position:absolute;left:707px;top:707px;width:61px;text-align:right;font:11px 'Liberation Sans', sans-serif;line-height:1;white-space:pre">53.7037048</div>
<div style="position:absolute;left:637px;top:707px;width:32px;text-align:right;font:11px 'Liberation Sans', sans-serif;line-height:1;white-space:pre">70</div>
<div style="position:absolute;left:672px;top:707px;width:32px;text-align:right;font:11px 'Liberation Sans', sans-serif;line-height:1;white-space:pre">30</div>
<div style="position:absolute;left:54px;top:722px;width:61px;text-align:right;font:11px 'Liberation Sans', sans-serif;line-height:1;white-space:pre">38827.5972</div>
<div style="position:absolute;left:118px;top:722px;width:61px;text-align:right;font:11px 'Liberation Sans', sans-serif;line-height:1;white-space:pre">11332</div>
<div style="position:absolute;left:182px;top:722px;width:41px;text-align:right;font:11px 'Liberation Sans', sans-serif;line-height:1;white-space:pre">11339</div>
<div style="position:absolute;left:226px;top:722px;width:41px;text-align:right;font:11px 'Liberation Sans', sans-serif;line-height:1;white-space:pre">11332</div>
<div style="position:absolute;left:270px;top:722px;width:41px;text-align:right;font:11px 'Liberation Sans', sans-serif;line-height:1;white-space:pre">11338</div>
<div style="position:absolute;left:314px;top:722px;width:41px;text-align:right;font:11px 'Liberation Sans', sans-serif;line-height:1;white-space:pre">242</div>
<div style="position:absolute;left:358px;top:722px;width:41px;text-align:right;font:11px 'Liberation Sans', sans-serif;line-height:1;white-space:pre">0</div>
<div style="position:absolute;left:468px;top:722px;width:24px;text-align:right;font:11px 'Liberation Sans', sans-serif;line-height:1;white-space:pre">0</div>
<div style="position:absolute;left:573px;top:722px;width:61px;text-align:right;font:11px 'Liberation Sans', sans-serif;line-height:1;white-space:pre">55.5555573</div>
<div style="position:absolute;left:707px;top:722px;width:61px;text-align:right;font:11px 'Liberation Sans', sans-serif;line-height:1;white-space:pre">55.5555573</div>
<div style="position:absolute;left:637px;top:722px;width:32px;text-align:right;font:11px 'Liberation Sans', sans-serif;line-height:1;white-space:pre">70</div>
<div style="position:absolute;left:672px;top:722px;width:32px;text-align:right;font:11px 'Liberation Sans', sans-serif;line-height:1;white-space:pre">30</div>
<div style="position:absolute;left:54px;top:737px;width:61px;text-align:right;font:11px 'Liberation Sans', sans-serif;line-height:1;white-space:pre">38827.5903</div>
<div style="position:absolute;left:118px;top:737px;width:61px;text-align:right;font:11px 'Liberation Sans', sans-serif;line-height:1;white-space:pre">11332</div>
<div style="position:absolute;left:182px;top:737px;width:41px;text-align:right;font:11px 'Liberation Sans', sans-serif;line-height:1;white-space:pre">11334</div>
<div style="position:absolute;left:226px;top:737px;width:41px;text-align:right;font:11px 'Liberation Sans', sans-serif;line-height:1;white-space:pre">11332</div>
<div style="position:absolute;left:270px;top:737px;width:41px;text-align:right;font:11px 'Liberation Sans', sans-serif;line-height:1;white-space:pre">11334</div>
<div style="position:absolute;left:314px;top:737px;width:41px;text-align:right;font:11px 'Liberation Sans', sans-serif;line-height:1;white-space:pre">33</div>
<div style="position:absolute;left:358px;top:737px;width:41px;text-align:right;font:11px 'Liberation Sans', sans-serif;line-height:1;white-space:pre">0</div>
<div style="position:absolute;left:468px;top:737px;width:24px;text-align:right;font:11px 'Liberation Sans', sans-serif;line-height:1;white-space:pre">0</div>
<div style="position:absolute;left:573px;top:737px;width:61px;text-align:right;font:11px 'Liberation Sans', sans-serif;line-height:1;white-space:pre">55.5555573</div>
<div style="position:absolute;left:707px;top:737px;width:61px;text-align:right;font:11px 'Liberation Sans', sans-serif;line-height:1;white-space:pre">53.2275162</div>
<div style="position:absolute;left:637px;top:737px;width:32px;text-align:right;font:11px 'Liberation Sans', sans-serif;line-height:1;white-space:pre">70</div>
<div style="position:absolute;left:672px;top:737px;width:32px;text-align:right;font:11px 'Liberation Sans', sans-serif;line-height:1;white-space:pre">30</div>
<div style="position:absolute;left:54px;top:752px;width:61px;text-align:right;font:11px 'Liberation Sans', sans-serif;line-height:1;white-space:pre">38827.5833</div>
<div style="position:absolute;left:118px;top:752px;width:61px;text-align:right;font:11px 'Liberation Sans', sans-serif;line-height:1;white-space:pre">11331</div>
<div style="position:absolute;left:182px;top:752px;width:41px;text-align:right;font:11px 'Liberation Sans', sans-serif;line-height:1;white-space:pre">11334</div>
<div style="position:absolute;left:226px;top:752px;width:41px;text-align:right;font:11px 'Liberation Sans', sans-serif;line-height:1;white-space:pre">11330</div>
<div style="position:absolute;left:270px;top:752px;width:41px;text-align:right;font:11px 'Liberation Sans', sans-serif;line-height:1;white-space:pre">11334</div>
<div style="position:absolute;left:314px;top:752px;width:41px;text-align:right;font:11px 'Liberation Sans', sans-serif;line-height:1;white-space:pre">34</div>
<div style="position:absolute;left:358px;top:752px;width:41px;text-align:right;font:11px 'Liberation Sans', sans-serif;line-height:1;white-space:pre">0</div>
<div style="position:absolute;left:468px;top:752px;width:24px;text-align:right;font:11px 'Liberation Sans', sans-serif;line-height:1;white-space:pre">0</div>
<div style="position:absolute;left:573px;top:752px;width:61px;text-align:right;font:11px 'Liberation Sans', sans-serif;line-height:1;white-space:pre">55.5555573</div>
<div style="position:absolute;left:707px;top:752px;width:61px;text-align:right;font:11px 'Liberation Sans', sans-serif;line-height:1;white-space:pre">54.7089958</div>
<div style="position:absolute;left:637px;top:752px;width:32px;text-align:right;font:11px 'Liberation Sans', sans-serif;line-height:1;white-space:pre">70</div>
<div style="position:absolute;left:672px;top:752px;width:32px;text-align:right;font:11px 'Liberation Sans', sans-serif;line-height:1;white-space:pre">30</div>
<div style="position:absolute;left:54px;top:767px;width:61px;text-align:right;font:11px 'Liberation Sans', sans-serif;line-height:1;white-space:pre">38827.5764</div>
<div style="position:absolute;left:118px;top:767px;width:61px;text-align:right;font:11px 'Liberation Sans', sans-serif;line-height:1;white-space:pre">11336</div>
<div style="position:absolute;left:182px;top:767px;width:41px;text-align:right;font:11px 'Liberation Sans', sans-serif;line-height:1;white-space:pre">11336</div>
<div style="position:absolute;left:226px;top:767px;width:41px;text-align:right;font:11px 'Liberation Sans', sans-serif;line-height:1;white-space:pre">11331</div>
<div style="position:absolute;left:270px;top:767px;width:41px;text-align:right;font:11px 'Liberation Sans', sans-serif;line-height:1;white-space:pre">11331</div>
<div style="position:absolute;left:314px;top:767px;width:41px;text-align:right;font:11px 'Liberation Sans', sans-serif;line-height:1;white-space:pre">39</div>
<div style="position:absolute;left:358px;top:767px;width:41px;text-align:right;font:11px 'Liberation Sans', sans-serif;line-height:1;white-space:pre">0</div>
<div style="position:absolute;left:468px;top:767px;width:24px;text-align:right;font:11px 'Liberation Sans', sans-serif;line-height:1;white-space:pre">0</div>
<div style="position:absolute;left:573px;top:767px;width:61px;text-align:right;font:11px 'Liberation Sans', sans-serif;line-height:1;white-space:pre">48.5714302</div>
<div style="position:absolute;left:707px;top:767px;width:61px;text-align:right;font:11px 'Liberation Sans', sans-serif;line-height:1;white-space:pre">56.6205826</div>
<div style="position:absolute;left:637px;top:767px;width:32px;text-align:right;font:11px 'Liberation Sans', sans-serif;line-height:1;white-space:pre">70</div>
<div style="position:absolute;left:672px;top:767px;width:32px;text-align:right;font:11px 'Liberation Sans', sans-serif;line-height:1;white-space:pre">30</div>
<div style="position:absolute;left:54px;top:782px;width:61px;text-align:right;font:11px 'Liberation Sans', sans-serif;line-height:1;white-space:pre">38827.5694</div>
<div style="position:absolute;left:118px;top:782px;width:61px;text-align:right;font:11px 'Liberation Sans', sans-serif;line-height:1;white-space:pre">11335</div>
<div style="position:absolute;left:182px;top:782px;width:41px;text-align:right;font:11px 'Liberation Sans', sans-serif;line-height:1;white-space:pre">11337</div>
<div style="position:absolute;left:226px;top:782px;width:41px;text-align:right;font:11px 'Liberation Sans', sans-serif;line-height:1;white-space:pre">11334</div>
<div style="position:absolute;left:270px;top:782px;width:41px;text-align:right;font:11px 'Liberation Sans', sans-serif;line-height:1;white-space:pre">11337</div>
<div style="position:absolute;left:314px;top:782px;width:41px;text-align:right;font:11px 'Liberation Sans', sans-serif;line-height:1;white-space:pre">30</div>
<div style="position:absolute;left:358px;top:782px;width:41px;text-align:right;font:11px 'Liberation Sans', sans-serif;line-height:1;white-space:pre">0</div>
<div style="position:absolute;left:468px;top:782px;width:24px;text-align:right;font:11px 'Liberation Sans', sans-serif;line-height:1;white-space:pre">0</div>
<div style="position:absolute;left:573px;top:782px;width:61px;text-align:right;font:11px 'Liberation Sans', sans-serif;line-height:1;white-space:pre">60</div>
<div style="position:absolute;left:707px;top:782px;width:61px;text-align:right;font:11px 'Liberation Sans', sans-serif;line-height:1;white-space:pre">58.3788261</div>
<div style="position:absolute;left:637px;top:782px;width:32px;text-align:right;font:11px 'Liberation Sans', sans-serif;line-height:1;white-space:pre">70</div>
<div style="position:absolute;left:672px;top:782px;width:32px;text-align:right;font:11px 'Liberation Sans', sans-serif;line-height:1;white-space:pre">30</div>
<div style="position:absolute;left:54px;top:797px;width:61px;text-align:right;font:11px 'Liberation Sans', sans-serif;line-height:1;white-space:pre">38827.5625</div>
<div style="position:absolute;left:118px;top:797px;width:61px;text-align:right;font:11px 'Liberation Sans', sans-serif;line-height:1;white-space:pre">11330</div>
<div style="position:absolute;left:182px;top:797px;width:41px;text-align:right;font:11px 'Liberation Sans', sans-serif;line-height:1;white-space:pre">11334</div>
<div style="position:absolute;left:226px;top:797px;width:41px;text-align:right;font:11px 'Liberation Sans', sans-serif;line-height:1;white-space:pre">11329</div>
<div style="position:absolute;left:270px;top:797px;width:41px;text-align:right;font:11px 'Liberation Sans', sans-serif;line-height:1;white-space:pre">11334</div>
<div style="position:absolute;left:314px;top:797px;width:41px;text-align:right;font:11px 'Liberation Sans', sans-serif;line-height:1;white-space:pre">47</div>
<div style="position:absolute;left:358px;top:797px;width:41px;text-align:right;font:11px 'Liberation Sans', sans-serif;line-height:1;white-space:pre">0</div>
<div style="position:absolute;left:468px;top:797px;width:24px;text-align:right;font:11px 'Liberation Sans', sans-serif;line-height:1;white-space:pre">0</div>
<div style="position:absolute;left:573px;top:797px;width:61px;text-align:right;font:11px 'Liberation Sans', sans-serif;line-height:1;white-space:pre">61.2903214</div>
<div style="position:absolute;left:707px;top:797px;width:61px;text-align:right;font:11px 'Liberation Sans', sans-serif;line-height:1;white-space:pre">62.1883507</div>
<div style="position:absolute;left:637px;top:797px;width:32px;text-align:right;font:11px 'Liberation Sans', sans-serif;line-height:1;white-space:pre">70</div>
<div style="position:absolute;left:672px;top:797px;width:32px;text-align:right;font:11px 'Liberation Sans', sans-serif;line-height:1;white-space:pre">30</div>
<div style="position:absolute;left:54px;top:812px;width:61px;text-align:right;font:11px 'Liberation Sans', sans-serif;line-height:1;white-space:pre">38827.5556</div>
<div style="position:absolute;left:118px;top:812px;width:61px;text-align:right;font:11px 'Liberation Sans', sans-serif;line-height:1;white-space:pre">11334</div>
<div style="position:absolute;left:182px;top:812px;width:41px;text-align:right;font:11px 'Liberation Sans', sans-serif;line-height:1;white-space:pre">11334</div>
<div style="position:absolute;left:226px;top:812px;width:41px;text-align:right;font:11px 'Liberation Sans', sans-serif;line-height:1;white-space:pre">11325</div>
<div style="position:absolute;left:270px;top:812px;width:41px;text-align:right;font:11px 'Liberation Sans', sans-serif;line-height:1;white-space:pre">11329</div>
<div style="position:absolute;left:314px;top:812px;width:41px;text-align:right;font:11px 'Liberation Sans', sans-serif;line-height:1;white-space:pre">60</div>
<div style="position:absolute;left:358px;top:812px;width:41px;text-align:right;font:11px 'Liberation Sans', sans-serif;line-height:1;white-space:pre">0</div>
<div style="position:absolute;left:468px;top:812px;width:24px;text-align:right;font:11px 'Liberation Sans', sans-serif;line-height:1;white-space:pre">1</div>
<div style="position:absolute;left:573px;top:812px;width:61px;text-align:right;font:11px 'Liberation Sans', sans-serif;line-height:1;white-space:pre">53.8461533</div>
<div style="position:absolute;left:707px;top:812px;width:61px;text-align:right;font:11px 'Liberation Sans', sans-serif;line-height:1;white-space:pre">65.0915756</div>
<div style="position:absolute;left:637px;top:812px;width:32px;text-align:right;font:11px 'Liberation Sans', sans-serif;line-height:1;white-space:pre">70</div>
<div style="position:absolute;left:672px;top:812px;width:32px;text-align:right;font:11px 'Liberation Sans', sans-serif;line-height:1;white-space:pre">30</div>
<div style="position:absolute;left:520px;top:630px;width:52px;height:14px;overflow:hidden">
<div style="position:absolute;left:1.02px;top:2px;font:normal 11px 'Liberation Sans', sans-serif;color:#000;white-space:pre;line-height:1;transform:scaleX(0.9762);transform-origin:0 0;">P&amp;F Box Size</div>
</div>
<div style="position:absolute;left:520px;top:675px;width:52px;height:14px;overflow:hidden">
<div style="position:absolute;left:1.08px;top:2px;font:normal 11px 'Liberation Sans', sans-serif;color:#000;white-space:pre;line-height:1;transform:scaleX(0.9184);transform-origin:0 0;">P&amp;F Reversal</div>
</div>
<div style="position:absolute;left:466px;top:628px;width:24px;height:12px;border:3px solid #000"></div>
<div style="position:absolute;left:491px;top:641px;width:5px;height:5px;background:#ffffff;"></div>
<div style="position:absolute;left:492px;top:642px;width:5px;height:5px;background:#000;"></div>
<div style="position:absolute;left:494px;top:642px;width:1px;height:5px;background:#555;"></div>
<div style="position:absolute;left:492px;top:644px;width:5px;height:1px;background:#555;"></div>
<div style="position:absolute;left:466px;top:629px;width:30px;height:1px;background:#4a4a4a;"></div>
<div style="position:absolute;left:467px;top:628px;width:1px;height:18px;background:#4a4a4a;"></div>
<div style="position:absolute;left:466px;top:644px;width:25px;height:1px;background:#4a4a4a;"></div>
<div style="position:absolute;left:494px;top:628px;width:1px;height:14px;background:#4a4a4a;"></div>
<div style="position:absolute;left:1026px;top:614px;width:15px;height:200px;background-color:#ffffff;background-image:linear-gradient(45deg,#d4d0c8 25%,transparent 25%,transparent 75%,#d4d0c8 75%),linear-gradient(45deg,#d4d0c8 25%,transparent 25%,transparent 75%,#d4d0c8 75%);background-size:2px 2px;background-position:0 0,1px 1px;"></div>
<div style="position:absolute;left:1026px;top:583px;width:15px;height:15px;background:#d4d0c8;"></div>
<div style="position:absolute;left:1026px;top:583px;width:15px;height:1px;background:#d4d0c8;"></div>
<div style="position:absolute;left:1026px;top:583px;width:1px;height:15px;background:#d4d0c8;"></div>
<div style="position:absolute;left:1027px;top:584px;width:13px;height:1px;background:#ffffff;"></div>
<div style="position:absolute;left:1027px;top:584px;width:1px;height:13px;background:#ffffff;"></div>
<div style="position:absolute;left:1026px;top:597px;width:15px;height:1px;background:#404040;"></div>
<div style="position:absolute;left:1040px;top:583px;width:1px;height:15px;background:#404040;"></div>
<div style="position:absolute;left:1027px;top:596px;width:13px;height:1px;background:#808080;"></div>
<div style="position:absolute;left:1039px;top:584px;width:1px;height:13px;background:#808080;"></div>
<svg style="position:absolute;left:1026px;top:583px" width="15" height="15" shape-rendering="crispEdges"><path d="M7 5h1v1h-1zM6 6h3v1h-3zM5 7h5v1h-5zM4 8h7v1h-7z" fill="#000"/></svg>
<div style="position:absolute;left:1026px;top:598px;width:15px;height:16px;background:#d4d0c8;"></div>
<div style="position:absolute;left:1026px;top:598px;width:15px;height:1px;background:#d4d0c8;"></div>
<div style="position:absolute;left:1026px;top:598px;width:1px;height:16px;background:#d4d0c8;"></div>
<div style="position:absolute;left:1027px;top:599px;width:13px;height:1px;background:#ffffff;"></div>
<div style="position:absolute;left:1027px;top:599px;width:1px;height:14px;background:#ffffff;"></div>
<div style="position:absolute;left:1026px;top:613px;width:15px;height:1px;background:#404040;"></div>
<div style="position:absolute;left:1040px;top:598px;width:1px;height:16px;background:#404040;"></div>
<div style="position:absolute;left:1027px;top:612px;width:13px;height:1px;background:#808080;"></div>
<div style="position:absolute;left:1039px;top:599px;width:1px;height:14px;background:#808080;"></div>
<div style="position:absolute;left:1026px;top:814px;width:15px;height:14px;background:#d4d0c8;"></div>
<div style="position:absolute;left:1026px;top:814px;width:15px;height:1px;background:#d4d0c8;"></div>
<div style="position:absolute;left:1026px;top:814px;width:1px;height:14px;background:#d4d0c8;"></div>
<div style="position:absolute;left:1027px;top:815px;width:13px;height:1px;background:#ffffff;"></div>
<div style="position:absolute;left:1027px;top:815px;width:1px;height:12px;background:#ffffff;"></div>
<div style="position:absolute;left:1026px;top:827px;width:15px;height:1px;background:#404040;"></div>
<div style="position:absolute;left:1040px;top:814px;width:1px;height:14px;background:#404040;"></div>
<div style="position:absolute;left:1027px;top:826px;width:13px;height:1px;background:#808080;"></div>
<div style="position:absolute;left:1039px;top:815px;width:1px;height:12px;background:#808080;"></div>
<svg style="position:absolute;left:1026px;top:814px" width="15" height="14" shape-rendering="crispEdges"><path d="M4 5h7v1h-7zM5 6h5v1h-5zM6 7h3v1h-3zM7 8h1v1h-1z" fill="#000"/></svg>
<div style="position:absolute;left:1026px;top:828px;width:15px;height:15px;background:#d4d0c8;"></div>
<div style="position:absolute;left:1026px;top:828px;width:15px;height:1px;background:#404040;"></div>
<div style="position:absolute;left:1026px;top:828px;width:1px;height:15px;background:#404040;"></div>
<div style="position:absolute;left:10px;top:828px;width:607px;height:15px;background:#d4d0c8;"></div>
<div style="position:absolute;left:108px;top:828px;width:509px;height:1px;background:#000;"></div>
<div style="position:absolute;left:10px;top:843px;width:1016px;height:1px;background:#000;"></div>
<div style="position:absolute;left:10px;top:828px;width:15px;height:15px;background:#d4d0c8;"></div>
<div style="position:absolute;left:10px;top:828px;width:15px;height:1px;background:#d4d0c8;"></div>
<div style="position:absolute;left:10px;top:828px;width:1px;height:15px;background:#d4d0c8;"></div>
<div style="position:absolute;left:11px;top:829px;width:13px;height:1px;background:#ffffff;"></div>
<div style="position:absolute;left:11px;top:829px;width:1px;height:13px;background:#ffffff;"></div>
<div style="position:absolute;left:10px;top:842px;width:15px;height:1px;background:#404040;"></div>
<div style="position:absolute;left:24px;top:828px;width:1px;height:15px;background:#404040;"></div>
<div style="position:absolute;left:11px;top:841px;width:13px;height:1px;background:#808080;"></div>
<div style="position:absolute;left:23px;top:829px;width:1px;height:13px;background:#808080;"></div>
<svg style="position:absolute;left:10px;top:828px" width="15" height="15" shape-rendering="crispEdges"><path d="M8 4h1v8h-1zM7 5h1v6h-1zM6 6h1v4h-1zM5 7h1v2h-1z" fill="#000"/></svg>
<div style="position:absolute;left:25px;top:828px;width:17px;height:15px;background:#d4d0c8;"></div>
<div style="position:absolute;left:25px;top:828px;width:17px;height:1px;background:#d4d0c8;"></div>
<div style="position:absolute;left:25px;top:828px;width:1px;height:15px;background:#d4d0c8;"></div>
<div style="position:absolute;left:26px;top:829px;width:15px;height:1px;background:#ffffff;"></div>
<div style="position:absolute;left:26px;top:829px;width:1px;height:13px;background:#ffffff;"></div>
<div style="position:absolute;left:25px;top:842px;width:17px;height:1px;background:#404040;"></div>
<div style="position:absolute;left:41px;top:828px;width:1px;height:15px;background:#404040;"></div>
<div style="position:absolute;left:26px;top:841px;width:15px;height:1px;background:#808080;"></div>
<div style="position:absolute;left:40px;top:829px;width:1px;height:13px;background:#808080;"></div>
<svg style="position:absolute;left:25px;top:828px" width="17" height="15" shape-rendering="crispEdges"><path d="M7 4h1v8h-1zM8 5h1v6h-1zM9 6h1v4h-1zM10 7h1v2h-1z" fill="#000"/></svg>
<svg style="position:absolute;left:0px;top:820px" width="130" height="27"><path d="M41.5 8 L50 23 L101 23 L108.5 8 Z" fill="#fff"/><path d="M41.5 8 L50 23 M101 23 L108.5 8" fill="none" stroke="#000" stroke-width="1.1"/></svg>
<div style="position:absolute;left:55.03px;top:830px;font:normal 12px 'Liberation Sans', sans-serif;color:#000;white-space:pre;line-height:1;transform:scaleX(0.9730);transform-origin:0 0;">Sheet1</div>
<div style="position:absolute;left:616px;top:828px;width:1px;height:15px;background:#000;"></div>
<div style="position:absolute;left:617px;top:828px;width:2px;height:15px;background:#ffffff;"></div>
<div style="position:absolute;left:619px;top:828px;width:1px;height:15px;background:#808080;"></div>
<div style="position:absolute;left:652px;top:828px;width:360px;height:15px;background-color:#ffffff;background-image:linear-gradient(45deg,#d4d0c8 25%,transparent 25%,transparent 75%,#d4d0c8 75%),linear-gradient(45deg,#d4d0c8 25%,transparent 25%,transparent 75%,#d4d0c8 75%);background-size:2px 2px;background-position:0 0,1px 1px;"></div>
<div style="position:absolute;left:620px;top:828px;width:16px;height:15px;background:#d4d0c8;"></div>
<div style="position:absolute;left:620px;top:828px;width:16px;height:1px;background:#d4d0c8;"></div>
<div style="position:absolute;left:620px;top:828px;width:1px;height:15px;background:#d4d0c8;"></div>
<div style="position:absolute;left:621px;top:829px;width:14px;height:1px;background:#ffffff;"></div>
<div style="position:absolute;left:621px;top:829px;width:1px;height:13px;background:#ffffff;"></div>
<div style="position:absolute;left:620px;top:842px;width:16px;height:1px;background:#404040;"></div>
<div style="position:absolute;left:635px;top:828px;width:1px;height:15px;background:#404040;"></div>
<div style="position:absolute;left:621px;top:841px;width:14px;height:1px;background:#808080;"></div>
<div style="position:absolute;left:634px;top:829px;width:1px;height:13px;background:#808080;"></div>
<svg style="position:absolute;left:620px;top:828px" width="16" height="15" shape-rendering="crispEdges"><path d="M9 3h1v8h-1zM8 4h1v6h-1zM7 5h1v4h-1zM6 6h1v2h-1z" fill="#000"/></svg>
<div style="position:absolute;left:636px;top:828px;width:16px;height:15px;background:#d4d0c8;"></div>
<div style="position:absolute;left:636px;top:828px;width:16px;height:1px;background:#d4d0c8;"></div>
<div style="position:absolute;left:636px;top:828px;width:1px;height:15px;background:#d4d0c8;"></div>
<div style="position:absolute;left:637px;top:829px;width:14px;height:1px;background:#ffffff;"></div>
<div style="position:absolute;left:637px;top:829px;width:1px;height:13px;background:#ffffff;"></div>
<div style="position:absolute;left:636px;top:842px;width:16px;height:1px;background:#404040;"></div>
<div style="position:absolute;left:651px;top:828px;width:1px;height:15px;background:#404040;"></div>
<div style="position:absolute;left:637px;top:841px;width:14px;height:1px;background:#808080;"></div>
<div style="position:absolute;left:650px;top:829px;width:1px;height:13px;background:#808080;"></div>
<div style="position:absolute;left:1012px;top:828px;width:14px;height:15px;background:#d4d0c8;"></div>
<div style="position:absolute;left:1012px;top:828px;width:14px;height:1px;background:#d4d0c8;"></div>
<div style="position:absolute;left:1012px;top:828px;width:1px;height:15px;background:#d4d0c8;"></div>
<div style="position:absolute;left:1013px;top:829px;width:12px;height:1px;background:#ffffff;"></div>
<div style="position:absolute;left:1013px;top:829px;width:1px;height:13px;background:#ffffff;"></div>
<div style="position:absolute;left:1012px;top:842px;width:14px;height:1px;background:#404040;"></div>
<div style="position:absolute;left:1025px;top:828px;width:1px;height:15px;background:#404040;"></div>
<div style="position:absolute;left:1013px;top:841px;width:12px;height:1px;background:#808080;"></div>
<div style="position:absolute;left:1024px;top:829px;width:1px;height:13px;background:#808080;"></div>
<svg style="position:absolute;left:1012px;top:828px" width="14" height="15" shape-rendering="crispEdges"><path d="M5 3h1v8h-1zM6 4h1v6h-1zM7 5h1v4h-1zM8 6h1v2h-1z" fill="#000"/></svg>
</body></html>
